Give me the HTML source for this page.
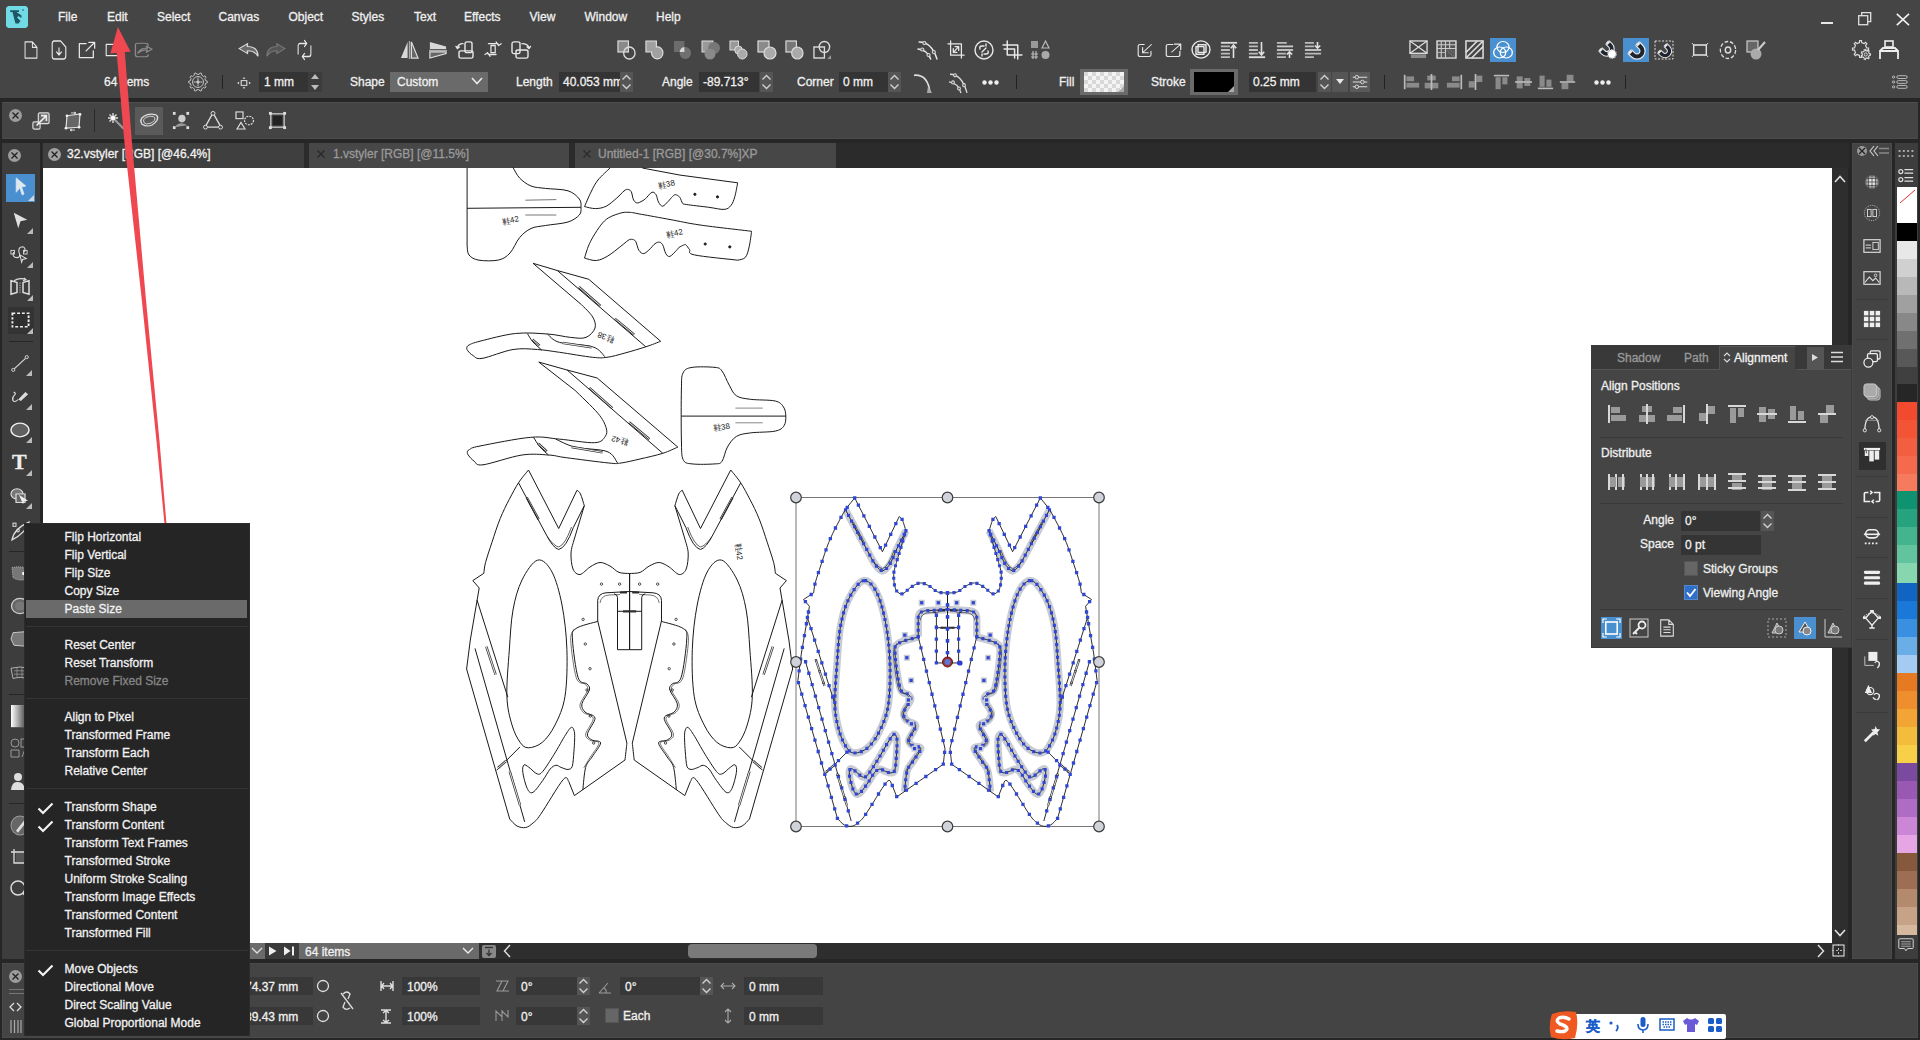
<!DOCTYPE html><html><head><meta charset="utf-8"><style>
*{margin:0;padding:0;box-sizing:border-box}
html,body{width:1920px;height:1040px;overflow:hidden;background:#262626;font-family:"Liberation Sans",sans-serif;font-size:12px;color:#f0f0f0}
.a{position:absolute}
.t{position:absolute;white-space:nowrap;line-height:14px;font-size:12px;-webkit-text-stroke:0.3px currentColor}
svg{position:absolute;overflow:visible}
.s{fill:none;stroke:#e8e8e8;stroke-width:1.4;stroke-linejoin:round;stroke-linecap:round}
.d{fill:none;stroke:#8a8a8a;stroke-width:1.4;stroke-linejoin:round;stroke-linecap:round}
.g{fill:#a8a8a8;stroke:none}
.w{fill:#e8e8e8;stroke:none}
</style></head><body>
<div class="a" style="left:0px;top:0px;width:1920px;height:98px;background:#454545;"></div>
<div class="a" style="left:2px;top:102px;width:1916px;height:37px;background:#444;border-top:1px solid #4e4e4e;border-bottom:1px solid #4b4b4b"></div>
<div class="a" style="left:42px;top:143px;width:1807px;height:25px;background:#2b2b2b;"></div>
<div class="a" style="left:2px;top:143px;width:38px;height:816px;background:#3d3d3d;"></div>
<div class="a" style="left:43px;top:168px;width:1789px;height:775px;background:#fff;"></div>
<div class="a" style="left:1832px;top:168px;width:16px;height:775px;background:#2e2e2e;"></div>
<div class="a" style="left:43px;top:943px;width:1805px;height:16px;background:#2e2e2e;"></div>
<div class="a" style="left:2px;top:963px;width:1916px;height:75px;background:#444;border:1px solid #4a4a4a"></div>
<div class="a" style="left:1852px;top:143px;width:40px;height:816px;background:#444;border:1px solid #4a4a4a"></div>
<div class="a" style="left:1895px;top:143px;width:23px;height:816px;background:#3d3d3d;"></div>
<div class="t" style="left:58px;top:10px;color:#f0f0f0;font-size:12px;">File</div>
<div class="t" style="left:107px;top:10px;color:#f0f0f0;font-size:12px;">Edit</div>
<div class="t" style="left:157px;top:10px;color:#f0f0f0;font-size:12px;">Select</div>
<div class="t" style="left:218.5px;top:10px;color:#f0f0f0;font-size:12px;">Canvas</div>
<div class="t" style="left:288.5px;top:10px;color:#f0f0f0;font-size:12px;">Object</div>
<div class="t" style="left:351.5px;top:10px;color:#f0f0f0;font-size:12px;">Styles</div>
<div class="t" style="left:414px;top:10px;color:#f0f0f0;font-size:12px;">Text</div>
<div class="t" style="left:464px;top:10px;color:#f0f0f0;font-size:12px;">Effects</div>
<div class="t" style="left:529.5px;top:10px;color:#f0f0f0;font-size:12px;">View</div>
<div class="t" style="left:584.5px;top:10px;color:#f0f0f0;font-size:12px;">Window</div>
<div class="t" style="left:656px;top:10px;color:#f0f0f0;font-size:12px;">Help</div>
<svg style="left:6px;top:6px" width="22" height="22" viewBox="0 0 22 22"><path d="M2 0 H20 L22 2 V20 L20 22 H2 L0 20 V2 Z" fill="#70dbe4"/><path d="M4.2 4.2 H13 V6 H10.5 L15.5 9.5 V12 L12.5 10 L11 11.5 L14.5 15 L12.5 17.5 H9.5 L8.5 14 L6.5 6 H4.2 Z" fill="#1f5565"/><circle cx="17" cy="4" r="0.8" fill="#1f5565"/></svg>
<div class="a" style="left:1821px;top:22px;width:12px;height:1px;background:#e8e8e8;height:1.5px"></div>
<svg style="left:1858px;top:12px" width="14" height="14" viewBox="0 0 14 14"><rect x="0.7" y="3.7" width="9" height="9" fill="none" stroke="#e0e0e0" stroke-width="1.3"/><path d="M3.7 3.7 V0.7 H12.7 V9.7 H9.7" fill="none" stroke="#e0e0e0" stroke-width="1.3"/></svg>
<svg style="left:1896px;top:13px" width="14" height="13" viewBox="0 0 14 13"><path d="M0.8 0.8 L13 12.2 M13 0.8 L0.8 12.2" stroke="#f0f0f0" stroke-width="1.6"/></svg>
<svg style="left:24px;top:41px" width="14" height="18" viewBox="0 0 20 20" preserveAspectRatio="none"><path class="s" d="M1.5 1 H12 L18.5 7 V19 H1.5 Z M12 1 V7 H18.5" stroke-width="1.6"/></svg>
<svg style="left:51px;top:40px" width="16" height="20" viewBox="0 0 20 20" preserveAspectRatio="none"><path class="s" stroke-width="1.6" d="M4 1 H12 L18.5 7 V16 Q18.5 19 15.5 19 H4 Q1.5 19 1.5 16 V4 Q1.5 1 4 1 Z"/><path class="s" stroke-width="1.6" d="M10 8 V15 M7 12 L10 15 L13 12"/></svg>
<svg style="left:78px;top:41px" width="18" height="18" viewBox="0 0 20 20" preserveAspectRatio="none"><path class="s" stroke-width="1.8" d="M9 3 H1.5 V18.5 H17 V11 M9 11 L18 2 M12 1.5 H18.5 V8"/></svg>
<svg style="left:105px;top:42px" width="16" height="16" viewBox="0 0 20 20" preserveAspectRatio="none"><path class="s" stroke-width="1.6" d="M1.5 3 H18.5 V17 H1.5 Z"/></svg>
<svg style="left:134px;top:42px" width="19" height="16" viewBox="0 0 20 20" preserveAspectRatio="none"><path class="d" d="M15 4 Q15 1.5 12 1.5 H4 Q1.5 1.5 1.5 4 V16 Q1.5 18.5 4 18.5 H12 Q15 18.5 15 16 M4 14 Q7 7 14 8 L13 5 L19 9 L13 13 L14 10 Q9 9 4 14"/></svg>
<svg style="left:238px;top:43px" width="21" height="14" viewBox="0 0 20 20" preserveAspectRatio="none"><path d="M1 8 L9 1 V5 Q19 5 19 19 Q16 11 9 11 V15 Z" fill="#6a6a6a" stroke="#d8d8d8" stroke-width="1.3"/></svg>
<svg style="left:266px;top:43px" width="20" height="14" viewBox="0 0 20 20" preserveAspectRatio="none"><path d="M19 8 L11 1 V5 Q1 5 1 19 Q4 11 11 11 V15 Z" fill="#555" stroke="#777" stroke-width="1.3"/></svg>
<svg style="left:297px;top:40px" width="15" height="20" viewBox="0 0 20 20" preserveAspectRatio="none"><path class="s" stroke-width="1.8" d="M12 3.5 H4 Q1.5 3.5 1.5 6 V14 M8 16.5 H16 Q18.5 16.5 18.5 14 V6 M10 0.5 L13 3.5 L10 6.5 M10 13.5 L7 16.5 L10 19.5"/></svg>
<svg style="left:400px;top:41px" width="19" height="18" viewBox="0 0 20 20" preserveAspectRatio="none"><path d="M1 19 L8 1 V19 Z" fill="#d8d8d8"/><path d="M10 0 V20" stroke="#aaa" stroke-width="1.5"/><path d="M12 1 L19 19 H12 Z" fill="#666" stroke="#ddd" stroke-width="1.3"/></svg>
<svg style="left:429px;top:41px" width="18" height="18" viewBox="0 0 20 20" preserveAspectRatio="none"><path d="M1 1 L19 6 V9 H1 Z" fill="#d8d8d8"/><path d="M0 10.5 H20" stroke="#aaa" stroke-width="1.5"/><path d="M1 12 H19 V14 L1 19 Z" fill="#666" stroke="#ddd" stroke-width="1.3"/></svg>
<svg style="left:456px;top:41px" width="20" height="18" viewBox="0 0 20 20" preserveAspectRatio="none"><rect x="9" y="1" width="7" height="12" rx="2" class="s"/><rect x="3" y="11" width="14" height="8" rx="2" class="s"/><path class="s" d="M7 3 Q2 3 1.5 8 M0 6 L1.5 8.5 L3.5 6.5"/></svg>
<svg style="left:485px;top:41px" width="17" height="18" viewBox="0 0 20 20" preserveAspectRatio="none"><path class="s" d="M7 5 H12 V13 H7 Z M4 3 H14 Q16 3 16 5 M13 1 L16 5 L19 3 M13 15 H5 Q3 15 3 13 M6 17 L3 13 L0 15"/></svg>
<svg style="left:511px;top:41px" width="20" height="18" viewBox="0 0 20 20" preserveAspectRatio="none"><rect x="1" y="1" width="8" height="13" rx="2" class="s"/><rect x="5" y="10" width="12" height="9" rx="2" class="s"/><path class="s" d="M11 3 Q17 3 18 8 M16 6.5 L18 8.5 L19.5 6"/></svg>
<svg style="left:617px;top:40px" width="19" height="20" viewBox="0 0 20 20" preserveAspectRatio="none"><rect x="1" y="1" width="11" height="11" fill="#8a8a8a" stroke="#ddd" stroke-width="1.2"/><circle cx="13" cy="13" r="6" fill="none" stroke="#ddd" stroke-width="1.4"/></svg>
<svg style="left:645px;top:40px" width="19" height="20" viewBox="0 0 20 20" preserveAspectRatio="none"><path d="M1 1 H12 V7 A6 6 0 1 1 7 12 H1 Z" fill="#a0a0a0" stroke="#ddd" stroke-width="1.2"/></svg>
<svg style="left:673px;top:40px" width="19" height="20" viewBox="0 0 20 20" preserveAspectRatio="none"><rect x="1" y="1" width="11" height="11" fill="#6c6c6c"/><circle cx="13" cy="13" r="6" fill="#707070"/><path d="M7 12 A6 6 0 0 1 12 7 V12 Z" fill="#d8d8d8"/></svg>
<svg style="left:701px;top:40px" width="20" height="20" viewBox="0 0 20 20" preserveAspectRatio="none"><rect x="1" y="1" width="11" height="11" fill="#9a9a9a" stroke="#ddd" stroke-width="1"/><circle cx="13" cy="8" r="6" fill="#777"/><circle cx="9" cy="14" r="5.5" fill="#8a8a8a"/></svg>
<svg style="left:729px;top:40px" width="19" height="20" viewBox="0 0 20 20" preserveAspectRatio="none"><rect x="1" y="1" width="9" height="9" fill="#999" stroke="#ddd" stroke-width="1"/><circle cx="10" cy="10" r="4" fill="#aaa" stroke="#ddd"/><circle cx="14" cy="14" r="5" fill="#aaa" stroke="#ddd"/></svg>
<svg style="left:757px;top:40px" width="20" height="20" viewBox="0 0 20 20" preserveAspectRatio="none"><rect x="1" y="1" width="11" height="11" fill="#8a8a8a" stroke="#ddd" stroke-width="1.2"/><circle cx="13" cy="13" r="6" fill="#aaa" stroke="#ddd" stroke-width="1.2"/></svg>
<svg style="left:785px;top:40px" width="19" height="20" viewBox="0 0 20 20" preserveAspectRatio="none"><rect x="1" y="1" width="11" height="11" fill="#777" stroke="#ddd" stroke-width="1.2"/><circle cx="13" cy="13" r="6" fill="#aaa" stroke="#ddd" stroke-width="1.2"/></svg>
<svg style="left:813px;top:40px" width="19" height="20" viewBox="0 0 20 20" preserveAspectRatio="none"><rect x="1" y="7" width="11" height="11" fill="none" stroke="#ddd" stroke-width="1.4"/><circle cx="12" cy="7" r="5.5" fill="none" stroke="#ddd" stroke-width="1.4"/><path d="M15 19 L19 15 V19 Z" fill="#999"/></svg>
<svg style="left:917px;top:40px" width="21" height="20" viewBox="0 0 20 20" preserveAspectRatio="none"><path class="s" d="M2 2 Q14 2 19 19 M1 9 Q10 10 13 19"/><circle cx="7" cy="3" r="1.5" fill="#555" stroke="#ddd"/><circle cx="16" cy="12" r="1.5" fill="#555" stroke="#ddd"/><circle cx="5" cy="9.5" r="1.5" fill="#555" stroke="#ddd"/><circle cx="11" cy="15" r="1.5" fill="#555" stroke="#ddd"/></svg>
<svg style="left:947px;top:40px" width="18" height="19" viewBox="0 0 20 20" preserveAspectRatio="none"><path class="s" stroke-width="1.8" d="M4 1 V16 H19 M1 4 H16 V19 M7 13 L13 7 M7 9 V13 H11 M9 7 H13 V11"/></svg>
<svg style="left:974px;top:40px" width="20" height="20" viewBox="0 0 20 20" preserveAspectRatio="none"><circle cx="10" cy="10" r="9" class="s"/><path class="s" d="M6 9 Q5 6 8 6 L10 6 M14 11 Q15 14 12 14 L10 14 M8 12 L12 8 M12 4 V6 M8 14 V16"/></svg>
<svg style="left:1002px;top:40px" width="21" height="20" viewBox="0 0 20 20" preserveAspectRatio="none"><path class="s" stroke-width="1.8" d="M5 1 V15 H19 M1 5 H15 V19"/><path d="M2 9 H12 V18" class="s"/></svg>
<svg style="left:1030px;top:40px" width="20" height="20" viewBox="0 0 20 20" preserveAspectRatio="none"><rect x="1" y="1" width="7" height="7" fill="#999"/><path d="M12 8 L15.5 1 L19 8 Z" fill="none" stroke="#bbb" stroke-width="1.2"/><circle cx="15.5" cy="15" r="4" fill="#aaa"/><path d="M1 14 H8 M1 17 H8 M3 11 V19 M6 11 V19" stroke="#bbb" stroke-width="1.2"/></svg>
<svg style="left:1137px;top:43px" width="16" height="15" viewBox="0 0 20 20" preserveAspectRatio="none"><path class="s" stroke-width="2" d="M9 2 H4 Q1.5 2 1.5 4.5 V15.5 Q1.5 18 4 18 H15 Q17.5 18 17.5 15.5 V11 M18 2 L8 12 M7 6 V13 H14"/></svg>
<svg style="left:1165px;top:43px" width="17" height="15" viewBox="0 0 20 20" preserveAspectRatio="none"><path class="s" stroke-width="2" d="M9 2 H4 Q1.5 2 1.5 4.5 V15.5 Q1.5 18 4 18 H15 Q17.5 18 17.5 15.5 V11 M8 12 L18 2 M11 1.5 H18.5 V9"/></svg>
<svg style="left:1191px;top:40px" width="20" height="19" viewBox="0 0 20 20" preserveAspectRatio="none"><circle cx="10" cy="10" r="9" class="s"/><rect x="5" y="7" width="8" height="8" class="s"/><rect x="7" y="5" width="8" height="8" class="s"/></svg>
<svg style="left:1220px;top:41px" width="18" height="18" viewBox="0 0 20 20" preserveAspectRatio="none"><path d="M1 2 H19" stroke="#ddd" stroke-width="2"/><path d="M1 6 H11 M1 10 H11 M1 14 H11 M1 18 H11" stroke="#bbb" stroke-width="2"/><path d="M15 19 V5 M12 8 L15 4.5 L18 8" stroke="#e0e0e0" stroke-width="1.8" fill="none"/></svg>
<svg style="left:1248px;top:41px" width="18" height="18" viewBox="0 0 20 20" preserveAspectRatio="none"><path d="M1 18 H19" stroke="#ddd" stroke-width="2"/><path d="M1 2 H11 M1 6 H11 M1 10 H11 M1 14 H11" stroke="#bbb" stroke-width="2"/><path d="M15 1 V15 M12 12 L15 15.5 L18 12" stroke="#e0e0e0" stroke-width="1.8" fill="none"/></svg>
<svg style="left:1276px;top:41px" width="18" height="18" viewBox="0 0 20 20" preserveAspectRatio="none"><path d="M1 2 H12 M1 10 H19 M1 14 H11 M1 18 H11" stroke="#bbb" stroke-width="2"/><path d="M1 6 H19" stroke="#ccc" stroke-width="2"/><path d="M15 19 V12 M12 15 L15 12 L18 15" stroke="#e0e0e0" stroke-width="1.8" fill="none"/></svg>
<svg style="left:1304px;top:41px" width="18" height="18" viewBox="0 0 20 20" preserveAspectRatio="none"><path d="M1 2 H11 M1 6 H11 M1 14 H19 M1 18 H11" stroke="#bbb" stroke-width="2"/><path d="M1 10 H19" stroke="#ccc" stroke-width="2"/><path d="M15 1 V8 M12 5 L15 8 L18 5" stroke="#e0e0e0" stroke-width="1.8" fill="none"/></svg>
<svg style="left:1409px;top:40px" width="19" height="19" viewBox="0 0 20 20" preserveAspectRatio="none"><rect x="1" y="1" width="18" height="13" fill="none" stroke="#ddd" stroke-width="1.4"/><path d="M1 1 L19 14 M19 1 L1 14" stroke="#ddd" stroke-width="1.2"/><rect x="2" y="15" width="16" height="4" fill="#8a8a8a"/></svg>
<svg style="left:1436px;top:40px" width="21" height="19" viewBox="0 0 20 20" preserveAspectRatio="none"><rect x="1" y="1" width="18" height="18" fill="#555" stroke="#ddd" stroke-width="1.4"/><path d="M5 1 V19 M9 1 V19 M13 1 V9 M1 5 H19 M1 9 H19 M1 13 H9" stroke="#ccc" stroke-width="1"/><path d="M10 11 L18 18 M13 10 L18 14" stroke="#888" stroke-width="1" stroke-dasharray="1 1"/></svg>
<svg style="left:1465px;top:40px" width="19" height="19" viewBox="0 0 20 20" preserveAspectRatio="none"><rect x="1" y="1" width="18" height="18" fill="none" stroke="#ddd" stroke-width="1.6"/><path d="M1 13 L13 1 M1 19 L19 1 M7 19 L19 7" stroke="#ddd" stroke-width="1.6"/></svg>
<div class="a" style="left:1490px;top:38px;width:26px;height:24px;background:#4a90d0;"></div>
<svg style="left:1492px;top:40px" width="22" height="20" viewBox="0 0 20 20" preserveAspectRatio="none"><circle cx="10" cy="7" r="5.5" fill="none" stroke="#fff" stroke-width="1.2"/><circle cx="7" cy="12.5" r="5.5" fill="none" stroke="#fff" stroke-width="1.2"/><circle cx="13" cy="12.5" r="5.5" fill="none" stroke="#fff" stroke-width="1.2"/></svg>
<svg style="left:1598px;top:40px" width="20" height="20" viewBox="0 0 20 20" preserveAspectRatio="none"><g transform="translate(-1,-1) scale(0.9)"><path d="M11.4 3.6 L14.9 7.1 A5.5 5.5 0 1 1 7.1 14.9 L3.6 11.4" fill="none" stroke="#e8e8e8" stroke-width="6.4"/><path d="M11.4 3.6 L14.9 7.1 A5.5 5.5 0 1 1 7.1 14.9 L3.6 11.4" fill="none" stroke="#1e2530" stroke-width="4"/><path d="M11 3.2 L13 5.2 M3.2 11 L5.2 13" stroke="#e8e8e8" stroke-width="4"/></g><circle cx="14" cy="14" r="4.2" fill="#fff" stroke="#bbb" stroke-width="1.4" stroke-dasharray="1.6 1"/></svg>
<div class="a" style="left:1623px;top:38px;width:26px;height:24px;background:#4a90d0;"></div>
<svg style="left:1626px;top:40px" width="20" height="20" viewBox="0 0 20 20" preserveAspectRatio="none"><path d="M11.4 3.6 L14.9 7.1 A5.5 5.5 0 1 1 7.1 14.9 L3.6 11.4" fill="none" stroke="#e8e8e8" stroke-width="6.4"/><path d="M11.4 3.6 L14.9 7.1 A5.5 5.5 0 1 1 7.1 14.9 L3.6 11.4" fill="none" stroke="#1e2530" stroke-width="4"/><path d="M11 3.2 L13 5.2 M3.2 11 L5.2 13" stroke="#e8e8e8" stroke-width="4"/></svg>
<svg style="left:1654px;top:40px" width="20" height="20" viewBox="0 0 20 20" preserveAspectRatio="none"><rect x="1" y="1" width="18" height="18" fill="none" stroke="#ddd" stroke-width="1" stroke-dasharray="2 1.5"/><g transform="translate(2,2) scale(0.82)"><path d="M11.4 3.6 L14.9 7.1 A5.5 5.5 0 1 1 7.1 14.9 L3.6 11.4" fill="none" stroke="#e8e8e8" stroke-width="6.4"/><path d="M11.4 3.6 L14.9 7.1 A5.5 5.5 0 1 1 7.1 14.9 L3.6 11.4" fill="none" stroke="#1e2530" stroke-width="4"/><path d="M11 3.2 L13 5.2 M3.2 11 L5.2 13" stroke="#e8e8e8" stroke-width="4"/></g></svg>
<svg style="left:1691px;top:40px" width="18" height="20" viewBox="0 0 20 20" preserveAspectRatio="none"><rect x="3" y="5" width="14" height="10" fill="none" stroke="#ddd" stroke-width="1.6"/><path d="M1 3 L3 5 M19 3 L17 5 M1 17 L3 15 M19 17 L17 15" stroke="#ddd" stroke-width="1"/></svg>
<svg style="left:1719px;top:40px" width="18" height="20" viewBox="0 0 20 20" preserveAspectRatio="none"><circle cx="10" cy="10" r="8.5" fill="none" stroke="#ddd" stroke-width="1.4" stroke-dasharray="4 2"/><circle cx="10" cy="10" r="3" fill="none" stroke="#ddd" stroke-width="1.6"/></svg>
<svg style="left:1746px;top:40px" width="20" height="20" viewBox="0 0 20 20" preserveAspectRatio="none"><rect x="1" y="1" width="11" height="11" fill="#666" stroke="#ccc" stroke-width="1.2"/><circle cx="10" cy="14" r="5.5" fill="#aaa"/><path d="M12 10 L19 2" stroke="#ccc" stroke-width="2"/></svg>
<svg style="left:1852px;top:40px" width="19" height="20" viewBox="0 0 20 20" preserveAspectRatio="none"><path d="M15.40 7.86 L17.44 8.00 L17.44 10.00 L15.40 10.14 L14.33 12.72 L15.68 14.26 L14.26 15.68 L12.72 14.33 L10.14 15.40 L10.00 17.44 L8.00 17.44 L7.86 15.40 L5.28 14.33 L3.74 15.68 L2.32 14.26 L3.67 12.72 L2.60 10.14 L0.56 10.00 L0.56 8.00 L2.60 7.86 L3.67 5.28 L2.32 3.74 L3.74 2.32 L5.28 3.67 L7.86 2.60 L8.00 0.56 L10.00 0.56 L10.14 2.60 L12.72 3.67 L14.26 2.32 L15.68 3.74 L14.33 5.28 Z" fill="none" stroke="#ddd" stroke-width="1.2"/><path d="M18.22 13.74 L19.45 13.83 L19.45 15.17 L18.22 15.26 L17.42 16.94 L18.11 17.96 L17.06 18.79 L16.23 17.89 L14.41 18.30 L14.05 19.48 L12.74 19.18 L12.93 17.96 L11.48 16.80 L10.33 17.25 L9.74 16.05 L10.82 15.43 L10.82 13.57 L9.74 12.95 L10.33 11.75 L11.48 12.20 L12.93 11.04 L12.74 9.82 L14.05 9.52 L14.41 10.70 L16.23 11.11 L17.06 10.21 L18.11 11.04 L17.42 12.06 Z" fill="#444" stroke="#ddd" stroke-width="1.1"/><circle cx="14.5" cy="14.5" r="1.6" fill="none" stroke="#ddd"/></svg>
<svg style="left:1879px;top:40px" width="20" height="20" viewBox="0 0 20 20" preserveAspectRatio="none"><rect x="6" y="1" width="8" height="6" fill="none" stroke="#eee" stroke-width="1.6"/><path d="M1 19 V11 H19 V19 M1 11 L4 8 H16 L19 11" fill="none" stroke="#eee" stroke-width="1.8"/></svg>
<div class="t" style="left:104px;top:75px;color:#f0f0f0;font-size:12px;">64 items</div>
<svg style="left:188px;top:72px" width="20" height="20" viewBox="0 0 20 20" preserveAspectRatio="none"><path d="M17.70 8.78 L19.26 9.12 L19.26 10.88 L17.70 11.22 L16.95 13.54 L18.00 14.73 L16.98 16.15 L15.52 15.52 L13.54 16.95 L13.69 18.54 L12.03 19.08 L11.22 17.70 L8.78 17.70 L7.97 19.08 L6.31 18.54 L6.46 16.95 L4.48 15.52 L3.02 16.15 L2.00 14.73 L3.05 13.54 L2.30 11.22 L0.74 10.88 L0.74 9.12 L2.30 8.78 L3.05 6.46 L2.00 5.27 L3.02 3.85 L4.48 4.48 L6.46 3.05 L6.31 1.46 L7.97 0.92 L8.78 2.30 L11.22 2.30 L12.03 0.92 L13.69 1.46 L13.54 3.05 L15.52 4.48 L16.98 3.85 L18.00 5.27 L16.95 6.46 Z" fill="none" stroke="#ccc" stroke-width="0.9"/><circle cx="10" cy="10" r="5.5" fill="none" stroke="#ccc" stroke-width="0.9"/><path d="M10 5.5 V14.5 M5.5 10 H14.5" stroke="#ccc" stroke-width="0.9"/><circle cx="10" cy="10" r="1.5" fill="#ccc"/></svg>
<div class="a" style="left:222px;top:75px;width:1px;height:14px;background:#222;"></div>
<svg style="left:237px;top:77px" width="14" height="12" viewBox="0 0 20 20" preserveAspectRatio="none"><rect x="6" y="6" width="8" height="8" fill="none" stroke="#ddd" stroke-width="1.6"/><path d="M10 0 L8 3 H12 Z M10 20 L8 17 H12 Z M0 10 L3 8 V12 Z M20 10 L17 8 V12 Z" fill="#ddd"/></svg>
<div class="a" style="left:259px;top:72px;width:49px;height:20px;background:#343434;"></div>
<div class="a" style="left:308px;top:72px;width:14px;height:20px;background:#3c3c3c;"></div>
<svg style="left:308px;top:72px" width="14" height="20" viewBox="0 0 14 20"><path d="M3.0 7.0 L7.0 2.0 L11.0 7.0 Z M3.0 13.0 L7.0 18.0 L11.0 13.0 Z" fill="#bbb"/></svg>
<div class="t" style="left:264px;top:75px;color:#f0f0f0;font-size:12px;">1 mm</div>
<div class="t" style="left:350px;top:75px;color:#f0f0f0;font-size:12px;">Shape</div>
<div class="a" style="left:390px;top:72px;width:98px;height:20px;background:#6a6a6a;"></div>
<div class="t" style="left:397px;top:75px;color:#f0f0f0;font-size:12px;">Custom</div>
<svg style="left:471px;top:77px" width="12" height="8" viewBox="0 0 12 8"><path d="M1 1 L6 6.5 L11 1" fill="none" stroke="#e8e8e8" stroke-width="1.6"/></svg>
<div class="t" style="left:516px;top:75px;color:#f0f0f0;font-size:12px;">Length</div>
<div class="a" style="left:559px;top:72px;width:61px;height:20px;background:#343434;"></div>
<div class="a" style="left:620px;top:72px;width:13px;height:20px;background:#555;"></div>
<svg style="left:620px;top:72px" width="13" height="20" viewBox="0 0 13 20"><path d="M2.5 7.5 L6.5 3.5 L10.5 7.5 M2.5 12.5 L6.5 16.5 L10.5 12.5" fill="none" stroke="#d0d0d0" stroke-width="1.4"/></svg>
<div class="t" style="left:563px;top:75px;color:#f0f0f0;font-size:12px;">40.053 mm</div>
<div class="a" style="left:620px;top:72px;width:13px;height:20px;background:#555;"></div>
<div class="a" style="left:620px;top:72px;width:13px;height:20px;background:#555;"></div>
<svg style="left:620px;top:72px" width="13" height="20" viewBox="0 0 13 20"><path d="M2.5 7.5 L6.5 3.5 L10.5 7.5 M2.5 12.5 L6.5 16.5 L10.5 12.5" fill="none" stroke="#d0d0d0" stroke-width="1.4"/></svg>
<div class="t" style="left:662px;top:75px;color:#f0f0f0;font-size:12px;">Angle</div>
<div class="a" style="left:699px;top:72px;width:60px;height:20px;background:#343434;"></div>
<div class="a" style="left:760px;top:72px;width:13px;height:20px;background:#555;"></div>
<svg style="left:760px;top:72px" width="13" height="20" viewBox="0 0 13 20"><path d="M2.5 7.5 L6.5 3.5 L10.5 7.5 M2.5 12.5 L6.5 16.5 L10.5 12.5" fill="none" stroke="#d0d0d0" stroke-width="1.4"/></svg>
<div class="t" style="left:703px;top:75px;color:#f0f0f0;font-size:12px;">-89.713°</div>
<div class="t" style="left:797px;top:75px;color:#f0f0f0;font-size:12px;">Corner</div>
<div class="a" style="left:839px;top:72px;width:49px;height:20px;background:#343434;"></div>
<div class="a" style="left:888px;top:72px;width:13px;height:20px;background:#555;"></div>
<svg style="left:888px;top:72px" width="13" height="20" viewBox="0 0 13 20"><path d="M2.5 7.5 L6.5 3.5 L10.5 7.5 M2.5 12.5 L6.5 16.5 L10.5 12.5" fill="none" stroke="#d0d0d0" stroke-width="1.4"/></svg>
<div class="t" style="left:843px;top:75px;color:#f0f0f0;font-size:12px;">0 mm</div>
<svg style="left:913px;top:72px" width="20" height="22" viewBox="0 0 20 20" preserveAspectRatio="none"><path d="M1 3 Q15 2 17 19" fill="none" stroke="#ddd" stroke-width="1.6"/><path d="M15 13 L19 19 H14 Z" fill="#aaa"/></svg>
<svg style="left:948px;top:72px" width="20" height="22" viewBox="0 0 20 20" preserveAspectRatio="none"><path d="M2 2 Q14 2 19 19 M1 9 Q10 10 13 19" fill="none" stroke="#ddd" stroke-width="1.3"/><circle cx="7" cy="3" r="1.4" fill="#555" stroke="#ddd"/><circle cx="16" cy="12" r="1.4" fill="#555" stroke="#ddd"/><circle cx="5" cy="9.5" r="1.4" fill="#555" stroke="#ddd"/><circle cx="11" cy="15" r="1.4" fill="#555" stroke="#ddd"/></svg>
<svg style="left:982px;top:80px" width="17" height="5" viewBox="0 0 17 5"><circle cx="2.5" cy="2.5" r="2.2" fill="#eee"/><circle cx="8.5" cy="2.5" r="2.2" fill="#eee"/><circle cx="14.5" cy="2.5" r="2.2" fill="#eee"/></svg>
<div class="a" style="left:1016px;top:75px;width:1px;height:14px;background:#222;"></div>
<div class="t" style="left:1059px;top:75px;color:#f0f0f0;font-size:12px;">Fill</div>
<div class="a" style="left:1080px;top:69px;width:48px;height:26px;background:#6a6a6a;"></div>
<svg style="left:1084px;top:72px" width="40" height="20" viewBox="0 0 40 20"><defs><pattern id="ck" width="8" height="8" patternUnits="userSpaceOnUse"><rect width="8" height="8" fill="#f4f4f4"/><rect width="4" height="4" fill="#d8d8d8"/><rect x="4" y="4" width="4" height="4" fill="#d8d8d8"/></pattern></defs><rect width="40" height="20" fill="url(#ck)"/><path d="M40 14 V20 H34 Z" fill="#aaa"/></svg>
<div class="t" style="left:1151px;top:75px;color:#f0f0f0;font-size:12px;">Stroke</div>
<div class="a" style="left:1190px;top:69px;width:48px;height:26px;background:#6a6a6a;"></div>
<div class="a" style="left:1194px;top:72px;width:40px;height:20px;background:#000;"></div>
<svg style="left:1228px;top:86px" width="6" height="6" viewBox="0 0 6 6"><path d="M6 0 V6 H0 Z" fill="#aaa"/></svg>
<div class="a" style="left:1249px;top:72px;width:67px;height:20px;background:#343434;"></div>
<div class="t" style="left:1253px;top:75px;color:#f0f0f0;font-size:12px;">0.25 mm</div>
<div class="a" style="left:1318px;top:72px;width:13px;height:20px;background:#555;"></div>
<svg style="left:1318px;top:72px" width="13" height="20" viewBox="0 0 13 20"><path d="M2.5 7.5 L6.5 3.5 L10.5 7.5 M2.5 12.5 L6.5 16.5 L10.5 12.5" fill="none" stroke="#d0d0d0" stroke-width="1.4"/></svg>
<div class="a" style="left:1332px;top:72px;width:16px;height:20px;background:#555;"></div>
<svg style="left:1336px;top:79px" width="8" height="6" viewBox="0 0 8 6"><path d="M0 0 H8 L4 5 Z" fill="#e8e8e8"/></svg>
<div class="a" style="left:1350px;top:72px;width:20px;height:20px;background:#5a5a5a;"></div>
<svg style="left:1352px;top:74px" width="16" height="16" viewBox="0 0 20 20" preserveAspectRatio="none"><path d="M1 4 H19 M1 10 H19 M1 16 H19" stroke="#ddd" stroke-width="1.4"/><circle cx="6" cy="4" r="2.2" fill="#5a5a5a" stroke="#ddd" stroke-width="1.2"/><circle cx="13" cy="10" r="2.2" fill="#5a5a5a" stroke="#ddd" stroke-width="1.2"/><circle cx="6" cy="16" r="2.2" fill="#5a5a5a" stroke="#ddd" stroke-width="1.2"/></svg>
<div class="a" style="left:1384px;top:75px;width:1px;height:14px;background:#222;"></div>
<svg style="left:1403px;top:74px" width="17" height="16" viewBox="0 0 20 20" preserveAspectRatio="none"><path d="M2 1 V19" stroke="#bbb" stroke-width="2"/><rect x="4" y="3" width="9" height="6" fill="#8a8a8a"/><rect x="4" y="11" width="15" height="6" fill="#8a8a8a"/></svg>
<svg style="left:1423px;top:74px" width="17" height="16" viewBox="0 0 20 20" preserveAspectRatio="none"><rect x="5" y="2" width="10" height="6" fill="#8a8a8a"/><rect x="2" y="11" width="16" height="7" fill="#8a8a8a"/><path d="M10 0 V20" stroke="#bbb" stroke-width="2"/></svg>
<svg style="left:1446px;top:74px" width="17" height="16" viewBox="0 0 20 20" preserveAspectRatio="none"><path d="M18 1 V19" stroke="#bbb" stroke-width="2"/><rect x="7" y="3" width="9" height="6" fill="#8a8a8a"/><rect x="1" y="11" width="15" height="6" fill="#8a8a8a"/></svg>
<svg style="left:1467px;top:74px" width="17" height="16" viewBox="0 0 20 20" preserveAspectRatio="none"><rect x="2" y="9" width="7" height="8" fill="#8a8a8a"/><rect x="11" y="2" width="7" height="8" fill="#8a8a8a"/><path d="M10 0 V20" stroke="#bbb" stroke-width="2"/></svg>
<svg style="left:1493px;top:74px" width="17" height="16" viewBox="0 0 20 20" preserveAspectRatio="none"><path d="M1 2 H19" stroke="#bbb" stroke-width="2"/><rect x="3" y="4" width="6" height="15" fill="#8a8a8a"/><rect x="11" y="4" width="6" height="9" fill="#8a8a8a"/></svg>
<svg style="left:1515px;top:74px" width="17" height="16" viewBox="0 0 20 20" preserveAspectRatio="none"><rect x="2" y="3" width="7" height="15" fill="#8a8a8a"/><rect x="11" y="5" width="7" height="10" fill="#8a8a8a"/><path d="M0 10 H20" stroke="#bbb" stroke-width="2"/></svg>
<svg style="left:1537px;top:74px" width="17" height="16" viewBox="0 0 20 20" preserveAspectRatio="none"><path d="M1 18 H19" stroke="#bbb" stroke-width="2"/><rect x="3" y="2" width="6" height="14" fill="#8a8a8a"/><rect x="11" y="7" width="6" height="9" fill="#8a8a8a"/></svg>
<svg style="left:1559px;top:74px" width="17" height="16" viewBox="0 0 20 20" preserveAspectRatio="none"><rect x="9" y="1" width="8" height="8" fill="#8a8a8a"/><rect x="3" y="11" width="8" height="8" fill="#8a8a8a"/><path d="M1 10 H19" stroke="#bbb" stroke-width="2"/></svg>
<svg style="left:1594px;top:80px" width="17" height="5" viewBox="0 0 17 5"><circle cx="2.5" cy="2.5" r="2.2" fill="#eee"/><circle cx="8.5" cy="2.5" r="2.2" fill="#eee"/><circle cx="14.5" cy="2.5" r="2.2" fill="#eee"/></svg>
<div class="a" style="left:1625px;top:75px;width:1px;height:14px;background:#222;"></div>
<svg style="left:1892px;top:75px" width="16" height="14" viewBox="0 0 20 20" preserveAspectRatio="none"><circle cx="2" cy="3" r="1.5" fill="none" stroke="#ddd"/><circle cx="2" cy="10" r="1.5" fill="none" stroke="#ddd"/><circle cx="2" cy="17" r="1.5" fill="none" stroke="#ddd"/><rect x="6" y="1" width="13" height="4" rx="2" fill="none" stroke="#ddd"/><rect x="6" y="8" width="13" height="4" rx="2" fill="none" stroke="#ddd"/><rect x="6" y="15" width="13" height="4" rx="2" fill="none" stroke="#ddd"/></svg>
<svg style="left:8.5px;top:108.5px" width="13.0" height="13.0" viewBox="0 0 13.0 13.0"><circle cx="6.5" cy="6.5" r="6.5" fill="#9c9c9c"/><path d="M3.5 3.5 L9.5 9.5 M9.5 3.5 L3.5 9.5" stroke="#222" stroke-width="1.3"/></svg>
<svg style="left:32px;top:112px" width="18" height="18" viewBox="0 0 20 20" preserveAspectRatio="none"><rect x="1" y="11" width="8" height="8" rx="1.5" fill="#555" stroke="#ddd" stroke-width="1.3"/><rect x="7" y="1" width="12" height="12" rx="1.5" fill="#666" stroke="#ddd" stroke-width="1.3"/><path d="M5 15 L16 4 M10 4 H16 V10" fill="none" stroke="#eee" stroke-width="1.8"/></svg>
<svg style="left:63px;top:112px" width="20" height="19" viewBox="0 0 20 20" preserveAspectRatio="none"><path d="M4 4 L17 2 L16 16 L3 17 Z" fill="#666" stroke="#ddd" stroke-width="1.2"/><circle cx="4" cy="4" r="1.4" fill="#eee"/><circle cx="17" cy="2.5" r="1.4" fill="#eee"/><circle cx="16" cy="16" r="1.4" fill="#eee"/><circle cx="3" cy="17" r="1.4" fill="#eee"/><path d="M8 1 H13 M11 0 L13 1 L11 2 M12 19 H7 M9 18 L7 19 L9 20" stroke="#ddd" stroke-width="1"/></svg>
<div class="a" style="left:94px;top:109px;width:1px;height:23px;background:#2a2a2a;"></div>
<svg style="left:106px;top:111px" width="20" height="20" viewBox="0 0 20 20" preserveAspectRatio="none"><path d="M2 7 H12 M7 2 V12 M3.5 3.5 L10.5 10.5 M10.5 3.5 L3.5 10.5" stroke="#ddd" stroke-width="1.4"/><circle cx="7" cy="7" r="2" fill="#fff"/><path d="M9 9 L18 18" stroke="#999" stroke-width="2.2"/></svg>
<div class="a" style="left:135px;top:107px;width:28px;height:28px;background:#5a5a5a;"></div>
<svg style="left:139px;top:113px" width="20" height="16" viewBox="0 0 20 20" preserveAspectRatio="none"><path d="M3 14 Q0 8 5 4 Q10 0 16 2 Q20 4 18 9 Q16 13 13 15 Q8 18 3 14 Z" fill="none" stroke="#ddd" stroke-width="1.4"/><path d="M5 12 Q3 8 7 5.5 Q11 3 14.5 4.5 Q17 6 15.5 9 Q14 12 11 13 Q7 15 5 12 Z" fill="none" stroke="#ddd" stroke-width="1"/></svg>
<svg style="left:172px;top:111px" width="18" height="19" viewBox="0 0 20 20" preserveAspectRatio="none"><rect x="1" y="1" width="3" height="3" fill="#ddd"/><rect x="16" y="1" width="3" height="3" fill="#ddd"/><rect x="1" y="16" width="3" height="3" fill="#ddd"/><rect x="16" y="16" width="3" height="3" fill="#ddd"/><circle cx="11" cy="8" r="4" fill="#ccc"/><path d="M3 17 Q8 10 17 15" fill="#999"/></svg>
<svg style="left:203px;top:111px" width="20" height="19" viewBox="0 0 20 20" preserveAspectRatio="none"><path d="M10 2 L2 17 H18 Z" fill="none" stroke="#ddd" stroke-width="1.3"/><circle cx="10" cy="2.5" r="2" fill="#444" stroke="#ddd"/><circle cx="2.5" cy="17" r="2" fill="#444" stroke="#ddd"/><circle cx="17.5" cy="17" r="2" fill="#444" stroke="#ddd"/></svg>
<svg style="left:235px;top:111px" width="20" height="19" viewBox="0 0 20 20" preserveAspectRatio="none"><rect x="1" y="1" width="7" height="7" fill="none" stroke="#ddd" stroke-width="1.2"/><circle cx="14" cy="10" r="4.5" fill="none" stroke="#ddd" stroke-width="1.2" stroke-dasharray="2 1"/><path d="M2 19 L6 12 L10 19 Z" fill="none" stroke="#ddd" stroke-width="1.2"/></svg>
<svg style="left:268px;top:111px" width="19" height="19" viewBox="0 0 20 20" preserveAspectRatio="none"><rect x="3" y="3" width="14" height="14" fill="none" stroke="#ddd" stroke-width="1.2"/><rect x="5" y="5" width="10" height="10" fill="#222"/><rect x="1" y="1" width="3" height="3" fill="#ddd"/><rect x="16" y="1" width="3" height="3" fill="#ddd"/><rect x="1" y="16" width="3" height="3" fill="#ddd"/><rect x="16" y="16" width="3" height="3" fill="#ddd"/></svg>
<div class="a" style="left:43px;top:143px;width:261px;height:25px;background:#3f3f3f;"></div>
<svg style="left:47.5px;top:147.5px" width="13.0" height="13.0" viewBox="0 0 13.0 13.0"><circle cx="6.5" cy="6.5" r="6.5" fill="#a2a2a2"/><path d="M3.5 3.5 L9.5 9.5 M9.5 3.5 L3.5 9.5" stroke="#222" stroke-width="1.3"/></svg>
<div class="t" style="left:67px;top:147px;color:#f2f2f2;font-size:12px;">32.vstyler [RGB] [@46.4%]</div>
<div class="a" style="left:309px;top:143px;width:260px;height:25px;background:#474747;"></div>
<svg style="left:316px;top:149px" width="10" height="10" viewBox="0 0 10 10"><path d="M1.5 1.5 L8.5 8.5 M8.5 1.5 L1.5 8.5" stroke="#2a2a2a" stroke-width="1.4"/></svg>
<div class="t" style="left:333px;top:147px;color:#9a9a9a;font-size:12px;">1.vstyler [RGB] [@11.5%]</div>
<div class="a" style="left:575px;top:143px;width:261px;height:25px;background:#474747;"></div>
<svg style="left:582px;top:149px" width="10" height="10" viewBox="0 0 10 10"><path d="M1.5 1.5 L8.5 8.5 M8.5 1.5 L1.5 8.5" stroke="#2a2a2a" stroke-width="1.4"/></svg>
<div class="t" style="left:598px;top:147px;color:#9a9a9a;font-size:12px;">Untitled-1 [RGB] [@30.7%]XP</div>
<svg style="left:7.5px;top:148.5px" width="13.0" height="13.0" viewBox="0 0 13.0 13.0"><circle cx="6.5" cy="6.5" r="6.5" fill="#9c9c9c"/><path d="M3.5 3.5 L9.5 9.5 M9.5 3.5 L3.5 9.5" stroke="#222" stroke-width="1.3"/></svg>
<div class="a" style="left:6px;top:174px;width:29px;height:28px;background:#4a90d0;"></div>
<svg style="left:15px;top:177px" width="12" height="18" viewBox="0 0 20 20" preserveAspectRatio="none"><path d="M2 1 L18 10 L11 11 L15 19 L12 20 L8 12 L2 17 Z" fill="#dfe8f0" stroke="#dfe8f0" stroke-width="1"/></svg>
<svg style="left:28px;top:195px" width="6" height="6" viewBox="0 0 6 6"><path d="M6 0 V6 H0 Z" fill="#cfd8e0"/></svg>
<svg style="left:13px;top:212px" width="15" height="17" viewBox="0 0 20 20" preserveAspectRatio="none"><path d="M1 1 L19 9 L10 11 L7 19 Z" fill="#e0e0e0"/></svg>
<svg style="left:27px;top:228px" width="6" height="6" viewBox="0 0 6 6"><path d="M6 0 V6 H0 Z" fill="#bbb"/></svg>
<svg style="left:10px;top:245px" width="18" height="18" viewBox="0 0 20 20" preserveAspectRatio="none"><path d="M4 8 Q2 14 8 14 Q12 14 10 8 Q9 2 14 2 Q18 3 16 8" fill="none" stroke="#ddd" stroke-width="1.2"/><rect x="1" y="6" width="4" height="4" fill="none" stroke="#ddd"/><rect x="15" y="6" width="4" height="4" fill="none" stroke="#ddd"/><path d="M11 11 L18 15 L14 16 L13 19 Z" fill="none" stroke="#ddd" stroke-width="1.2"/></svg>
<svg style="left:27px;top:262px" width="6" height="6" viewBox="0 0 6 6"><path d="M6 0 V6 H0 Z" fill="#bbb"/></svg>
<svg style="left:10px;top:278px" width="20" height="18" viewBox="0 0 20 20" preserveAspectRatio="none"><path d="M1 3 L7 5 V16 L1 18 Z M19 3 L13 5 V16 L19 18 Z" fill="none" stroke="#ddd" stroke-width="1.5"/><path d="M10 5 V17" stroke="#bbb" stroke-dasharray="1.5 1"/><path d="M4 3 Q10 -1 16 2 M14 0 L16 2 L13 3" fill="none" stroke="#ddd" stroke-width="1.2"/></svg>
<svg style="left:27px;top:295px" width="6" height="6" viewBox="0 0 6 6"><path d="M6 0 V6 H0 Z" fill="#bbb"/></svg>
<div class="a" style="left:8px;top:307px;width:26px;height:27px;background:#333;"></div>
<svg style="left:11px;top:312px" width="19" height="16" viewBox="0 0 20 20" preserveAspectRatio="none"><rect x="1.5" y="1.5" width="17" height="17" fill="#2e2e2e" stroke="#eee" stroke-width="2" stroke-dasharray="3 2"/></svg>
<svg style="left:27px;top:328px" width="6" height="6" viewBox="0 0 6 6"><path d="M6 0 V6 H0 Z" fill="#bbb"/></svg>
<div class="a" style="left:9px;top:341px;width:24px;height:1px;background:#262626;"></div>
<svg style="left:11px;top:355px" width="18" height="17" viewBox="0 0 20 20" preserveAspectRatio="none"><path d="M3 17 L17 3" stroke="#ddd" stroke-width="1.2"/><circle cx="2.5" cy="17.5" r="1.8" fill="#444" stroke="#ddd"/><circle cx="17.5" cy="2.5" r="1.8" fill="#444" stroke="#ddd"/></svg>
<svg style="left:26px;top:370px" width="6" height="6" viewBox="0 0 6 6"><path d="M6 0 V6 H0 Z" fill="#bbb"/></svg>
<svg style="left:11px;top:389px" width="18" height="15" viewBox="0 0 20 20" preserveAspectRatio="none"><path d="M8 14 L16 4 L19 7 L11 16 Z" fill="#ddd"/><path d="M8 14 Q4 19 2 15 Q1 11 4 8 Q6 6 3 4" fill="none" stroke="#ddd" stroke-width="1.3"/></svg>
<svg style="left:26px;top:404px" width="6" height="6" viewBox="0 0 6 6"><path d="M6 0 V6 H0 Z" fill="#bbb"/></svg>
<svg style="left:10px;top:422px" width="20" height="16" viewBox="0 0 20 20" preserveAspectRatio="none"><ellipse cx="10" cy="10" rx="9" ry="8.5" fill="#606060" stroke="#eee" stroke-width="1.5"/></svg>
<svg style="left:26px;top:437px" width="6" height="6" viewBox="0 0 6 6"><path d="M6 0 V6 H0 Z" fill="#bbb"/></svg>
<div class="t" style="left:12px;top:450px;font-family:'Liberation Serif',serif;font-weight:bold;font-size:22px;line-height:24px;color:#eee">T</div>
<svg style="left:26px;top:470px" width="6" height="6" viewBox="0 0 6 6"><path d="M6 0 V6 H0 Z" fill="#bbb"/></svg>
<svg style="left:10px;top:488px" width="20" height="17" viewBox="0 0 20 20" preserveAspectRatio="none"><circle cx="7" cy="7" r="6" fill="#777" stroke="#ddd" stroke-width="1.2"/><rect x="6" y="7" width="9" height="10" fill="#666" stroke="#ddd" stroke-width="1.2"/><path d="M9 8 L18 15 L14 15.5 L13 19 Z" fill="#eee"/></svg>
<svg style="left:26px;top:503px" width="6" height="6" viewBox="0 0 6 6"><path d="M6 0 V6 H0 Z" fill="#bbb"/></svg>
<svg style="left:10px;top:520px" width="20" height="21" viewBox="0 0 20 20" preserveAspectRatio="none"><path d="M2 19 Q4 8 19 2 Q16 12 2 19 Z" fill="none" stroke="#ddd" stroke-width="1.3"/><rect x="3" y="3" width="3" height="3" fill="none" stroke="#ddd"/><circle cx="8" cy="10" r="1.3" fill="none" stroke="#ddd"/></svg>
<div class="a" style="left:9px;top:551px;width:24px;height:1px;background:#262626;"></div>
<svg style="left:10px;top:565px" width="20" height="17" viewBox="0 0 20 20" preserveAspectRatio="none"><path d="M2 3 Q10 1 18 4 L16 17 Q9 19 3 15 Z" fill="#777" stroke="#bbb" stroke-dasharray="1 1"/><circle cx="14" cy="10" r="2" fill="#fff"/></svg>
<svg style="left:10px;top:597px" width="20" height="18" viewBox="0 0 20 20" preserveAspectRatio="none"><circle cx="10" cy="10" r="8.5" fill="#666" stroke="#ccc" stroke-width="1.3"/><circle cx="10" cy="10" r="5" fill="#777"/></svg>
<svg style="left:10px;top:630px" width="20" height="18" viewBox="0 0 20 20" preserveAspectRatio="none"><path d="M3 3 L14 2 L19 8 L16 18 L4 17 L1 10 Z" fill="#777" stroke="#ccc"/></svg>
<svg style="left:10px;top:664px" width="20" height="17" viewBox="0 0 20 20" preserveAspectRatio="none"><path d="M1 5 Q10 2 19 5 L17 17 Q10 14 3 17 Z" fill="none" stroke="#bbb"/><path d="M4 8 H16 M4 12 H16 M7 4 V16 M12 4 V16" stroke="#999" stroke-width="0.8"/></svg>
<div class="a" style="left:9px;top:694px;width:24px;height:1px;background:#262626;"></div>
<svg style="left:10px;top:704px" width="20" height="22" viewBox="0 0 20 20" preserveAspectRatio="none"><rect x="1" y="1" width="14" height="20" fill="#cfcfcf"/><rect x="1" y="1" width="14" height="20" fill="url(#gr)"/><defs><linearGradient id="gr"><stop offset="0" stop-color="#fff"/><stop offset="1" stop-color="#555"/></linearGradient></defs></svg>
<svg style="left:10px;top:738px" width="20" height="20" viewBox="0 0 20 20" preserveAspectRatio="none"><circle cx="5" cy="5" r="4" fill="none" stroke="#999"/><rect x="11" y="1" width="8" height="8" fill="none" stroke="#999"/><path d="M1 12 H9 V19 H1 Z M12 19 L15 11 L19 19" fill="none" stroke="#999"/></svg>
<svg style="left:10px;top:771px" width="20" height="20" viewBox="0 0 20 20" preserveAspectRatio="none"><circle cx="8" cy="6" r="4" fill="#ddd"/><path d="M1 19 Q2 10 8 11 Q14 11 15 19 Z" fill="#ddd"/></svg>
<div class="a" style="left:9px;top:803px;width:24px;height:1px;background:#262626;"></div>
<svg style="left:10px;top:815px" width="20" height="21" viewBox="0 0 20 20" preserveAspectRatio="none"><circle cx="10" cy="10" r="9" fill="#666" stroke="#999"/><path d="M6 15 L15 4 L17 6 L8 17 Z" fill="#ddd"/></svg>
<svg style="left:10px;top:848px" width="20" height="20" viewBox="0 0 20 20" preserveAspectRatio="none"><path d="M4 1 V15 H19 M1 4 H15" fill="none" stroke="#ddd" stroke-width="1.3"/><rect x="6" y="5" width="9" height="9" fill="#555"/></svg>
<svg style="left:10px;top:880px" width="20" height="20" viewBox="0 0 20 20" preserveAspectRatio="none"><circle cx="8" cy="8" r="7" fill="none" stroke="#ddd" stroke-width="1.5"/><path d="M13 13 L18 18" stroke="#ddd" stroke-width="2"/></svg>
<svg style="left:1834px;top:175px" width="12" height="8" viewBox="0 0 12 8"><path d="M1 7 L6 1.5 L11 7" fill="none" stroke="#e0e0e0" stroke-width="1.6"/></svg>
<svg style="left:1834px;top:929px" width="12" height="8" viewBox="0 0 12 8"><path d="M1 1 L6 6.5 L11 1" fill="none" stroke="#e0e0e0" stroke-width="1.6"/></svg>
<svg style="left:1857px;top:146px" width="10" height="10" viewBox="0 0 10 10"><circle cx="5" cy="5" r="5" fill="#9a9a9a"/><path d="M2 2 L8 8 M8 2 L2 8" stroke="#222" stroke-width="1.3"/></svg>
<svg style="left:1869px;top:145px" width="12" height="12" viewBox="0 0 12 12"><path d="M5 1 L1 6 L5 11 M9 1 L5 6 L9 11" fill="none" stroke="#d0d0d0" stroke-width="1.1"/></svg>
<svg style="left:1878px;top:146px" width="12" height="10" viewBox="0 0 12 10"><path d="M1 2.5 H11 M1 7 H11" stroke="#888" stroke-width="1.6"/></svg>
<svg style="left:1863.0px;top:173.0px" width="18.0" height="18.0" viewBox="0 0 20 20" preserveAspectRatio="none"><defs><radialGradient id="rg"><stop offset="0" stop-color="#fff"/><stop offset="0.6" stop-color="#ccc"/><stop offset="1" stop-color="#555"/></radialGradient></defs><circle cx="10" cy="10" r="8" fill="url(#rg)"/><path d="M4 6 H16 M3 10 H17 M4 14 H16 M6 3 V17 M10 2 V18 M14 3 V17" stroke="#444" stroke-width="0.9"/></svg>
<svg style="left:1863.0px;top:204.0px" width="18.0" height="18.0" viewBox="0 0 20 20" preserveAspectRatio="none"><circle cx="10" cy="10" r="8.5" fill="none" stroke="#bbb" stroke-dasharray="1.2 1"/><rect x="5" y="6" width="4" height="8" fill="none" stroke="#ddd"/><rect x="11" y="6" width="4" height="8" fill="none" stroke="#ddd"/></svg>
<svg style="left:1863.0px;top:237.0px" width="18.0" height="18.0" viewBox="0 0 20 20" preserveAspectRatio="none"><rect x="1" y="3" width="18" height="14" fill="none" stroke="#ddd" stroke-width="1.3"/><path d="M3 9 H9 M3 12 H9" stroke="#bbb" stroke-width="1.5"/><rect x="11" y="6" width="6" height="8" fill="none" stroke="#ddd"/></svg>
<svg style="left:1863.0px;top:269.0px" width="18.0" height="18.0" viewBox="0 0 20 20" preserveAspectRatio="none"><rect x="1" y="3" width="18" height="14" fill="none" stroke="#ddd" stroke-width="1.3"/><path d="M2 15 L7 9 L11 13 L14 10 L18 15" fill="none" stroke="#ddd" stroke-width="1.2"/><circle cx="14" cy="7" r="1.5" fill="none" stroke="#ddd"/></svg>
<div class="a" style="left:1856px;top:299px;width:32px;height:1px;background:#3a3a3a;"></div>
<svg style="left:1863.0px;top:310.0px" width="18.0" height="18.0" viewBox="0 0 20 20" preserveAspectRatio="none"><rect x="1" y="1" width="5" height="5" fill="#eee"/><rect x="7.5" y="1" width="5" height="5" fill="#eee"/><rect x="14" y="1" width="5" height="5" fill="#eee"/><rect x="1" y="7.5" width="5" height="5" fill="#eee"/><rect x="7.5" y="7.5" width="5" height="5" fill="#eee"/><rect x="14" y="7.5" width="5" height="5" fill="#eee"/><rect x="1" y="14" width="5" height="5" fill="#eee"/><rect x="7.5" y="14" width="5" height="5" fill="#eee"/><rect x="14" y="14" width="5" height="5" fill="#eee"/></svg>
<div class="a" style="left:1856px;top:339px;width:32px;height:1px;background:#3a3a3a;"></div>
<svg style="left:1863.0px;top:350.0px" width="18.0" height="18.0" viewBox="0 0 20 20" preserveAspectRatio="none"><rect x="8" y="1" width="11" height="9" rx="1.5" fill="none" stroke="#eee" stroke-width="1.4"/><rect x="5" y="4" width="11" height="9" rx="1.5" fill="#444" stroke="#eee" stroke-width="1.4"/><circle cx="6" cy="14" r="5" fill="#444" stroke="#eee" stroke-width="1.4"/></svg>
<svg style="left:1863.0px;top:383.0px" width="18.0" height="18.0" viewBox="0 0 20 20" preserveAspectRatio="none"><rect x="5" y="5" width="14" height="14" rx="3" fill="#888" stroke="#bbb"/><rect x="3" y="3" width="14" height="14" rx="3" fill="#999" stroke="#bbb"/><rect x="1" y="1" width="14" height="14" rx="3" fill="#aaa" stroke="#ccc"/></svg>
<svg style="left:1863.0px;top:415.0px" width="18.0" height="18.0" viewBox="0 0 20 20" preserveAspectRatio="none"><path d="M2 18 Q2 2 10 2 Q18 2 18 18" fill="none" stroke="#eee" stroke-width="1.3"/><path d="M2 6 L18 6" stroke="#aaa" stroke-width="0.8"/><circle cx="10" cy="2.5" r="1.8" fill="#444" stroke="#eee"/><circle cx="2" cy="17" r="1.8" fill="#444" stroke="#eee"/><circle cx="18" cy="17" r="1.8" fill="#444" stroke="#eee"/></svg>
<div class="a" style="left:1859px;top:442px;width:27px;height:28px;background:#2f2f2f;"></div>
<svg style="left:1863.0px;top:447.0px" width="18.0" height="18.0" viewBox="0 0 20 20" preserveAspectRatio="none"><rect x="1" y="1" width="18" height="2.5" fill="#eee"/><rect x="2" y="4" width="4" height="6" fill="#eee"/><rect x="7" y="4" width="5" height="12" fill="#eee"/><rect x="13" y="4" width="5" height="10" fill="#eee"/><path d="M3 2 L4 7" stroke="#444"/></svg>
<div class="a" style="left:1856px;top:476px;width:32px;height:1px;background:#3a3a3a;"></div>
<svg style="left:1863.0px;top:488.0px" width="18.0" height="18.0" viewBox="0 0 20 20" preserveAspectRatio="none"><path d="M6 5 H3 Q1.5 5 1.5 6.5 V15 H8 M14 15 H17 Q18.5 15 18.5 13.5 V5 H12 M8 3 L10 5 L8 7 M12 13 L10 15 L12 17" fill="none" stroke="#eee" stroke-width="1.8"/></svg>
<div class="a" style="left:1856px;top:517px;width:32px;height:1px;background:#3a3a3a;"></div>
<svg style="left:1863.0px;top:528.0px" width="18.0" height="18.0" viewBox="0 0 20 20" preserveAspectRatio="none"><rect x="3" y="2" width="14" height="9" rx="4.5" fill="none" stroke="#eee" stroke-width="1.8"/><path d="M1 7 H19" stroke="#eee" stroke-width="1.8"/><path d="M2 17 H18" stroke="#eee" stroke-width="2" stroke-dasharray="2 2"/></svg>
<div class="a" style="left:1856px;top:557px;width:32px;height:1px;background:#3a3a3a;"></div>
<svg style="left:1863.0px;top:569.0px" width="18.0" height="18.0" viewBox="0 0 20 20" preserveAspectRatio="none"><rect x="1" y="2" width="18" height="3.5" rx="1.5" fill="#eee"/><rect x="1" y="8" width="18" height="3.5" rx="1.5" fill="#eee"/><rect x="1" y="14" width="18" height="3.5" rx="1.5" fill="#eee"/></svg>
<div class="a" style="left:1856px;top:598px;width:32px;height:1px;background:#3a3a3a;"></div>
<svg style="left:1863.0px;top:610.0px" width="18.0" height="18.0" viewBox="0 0 20 20" preserveAspectRatio="none"><path d="M10 1 L17 9 L10 17 L3 9 Z" fill="none" stroke="#eee" stroke-width="1.5"/><path d="M1 7 Q10 0 19 7" fill="none" stroke="#eee" stroke-dasharray="1.5 1"/><rect x="8" y="0" width="4" height="3" fill="#eee"/><rect x="0" y="7" width="3" height="3" fill="#eee"/><rect x="17" y="7" width="3" height="3" fill="#eee"/><path d="M10 17 V20 M7 20 H13" stroke="#eee" stroke-width="1.5"/></svg>
<div class="a" style="left:1856px;top:639px;width:32px;height:1px;background:#3a3a3a;"></div>
<svg style="left:1863.0px;top:651.0px" width="18.0" height="18.0" viewBox="0 0 20 20" preserveAspectRatio="none"><rect x="6" y="1" width="10" height="10" fill="#eee"/><path d="M2 6 V16 H12" fill="none" stroke="#ccc"/><path d="M13 13 Q16 10 18 13 Q19 16 16 19" fill="none" stroke="#eee" stroke-width="1.4"/></svg>
<svg style="left:1863.0px;top:683.0px" width="18.0" height="18.0" viewBox="0 0 20 20" preserveAspectRatio="none"><path d="M2 11 L6 2 L10 11 Z" fill="#eee"/><circle cx="8" cy="9" r="4" fill="none" stroke="#eee" stroke-width="1.3"/><path d="M12 13 Q15 10 18 13 Q19 16 16 19 M11 16 Q13 19 15 18" fill="none" stroke="#eee" stroke-width="1.4"/></svg>
<div class="a" style="left:1856px;top:712px;width:32px;height:1px;background:#3a3a3a;"></div>
<svg style="left:1863.0px;top:725.0px" width="18.0" height="18.0" viewBox="0 0 20 20" preserveAspectRatio="none"><path d="M2 18 L12 8" stroke="#eee" stroke-width="3"/><path d="M14 1 L15.5 4.5 L19 5 L16 8 L17 12 L14 10 L11 12 L12 8 L9 5 L13 4.5 Z" fill="#eee"/></svg>
<svg style="left:1898px;top:149px" width="16" height="10" viewBox="0 0 20 20" preserveAspectRatio="none"><circle cx="2" cy="4" r="1.5" fill="#ddd"/><circle cx="7.3" cy="4" r="1.5" fill="#ddd"/><circle cx="12.6" cy="4" r="1.5" fill="#ddd"/><circle cx="18" cy="4" r="1.5" fill="#ddd"/><circle cx="2" cy="14" r="1.5" fill="#ddd"/><circle cx="7.3" cy="14" r="1.5" fill="#ddd"/><circle cx="12.6" cy="14" r="1.5" fill="#ddd"/><circle cx="18" cy="14" r="1.5" fill="#ddd"/></svg>
<svg style="left:1898px;top:168px" width="16" height="16" viewBox="0 0 20 20" preserveAspectRatio="none"><circle cx="3.5" cy="4.5" r="2.5" fill="none" stroke="#ddd" stroke-width="1.5"/><circle cx="3.5" cy="14.5" r="2.5" fill="none" stroke="#ddd" stroke-width="1.5"/><path d="M8 2 H19 M8 6.5 H19 M8 12 H19 M8 16.5 H19" stroke="#ddd" stroke-width="1.5"/></svg>
<div class="a" style="left:1897px;top:187px;width:20px;height:36px;background:#ffffff;"></div>
<svg style="left:1897px;top:187px" width="20" height="19" viewBox="0 0 20 19"><path d="M3 16 L18 3" stroke="#e03030" stroke-width="1"/></svg>
<div class="a" style="left:1897px;top:223px;width:20px;height:18px;background:#000000;"></div>
<div class="a" style="left:1897px;top:241px;width:20px;height:18px;background:#e8e8e8;"></div>
<div class="a" style="left:1897px;top:259px;width:20px;height:18px;background:#d0d0d0;"></div>
<div class="a" style="left:1897px;top:277px;width:20px;height:18px;background:#b8b8b8;"></div>
<div class="a" style="left:1897px;top:295px;width:20px;height:18px;background:#a0a0a0;"></div>
<div class="a" style="left:1897px;top:313px;width:20px;height:18px;background:#888888;"></div>
<div class="a" style="left:1897px;top:331px;width:20px;height:18px;background:#707070;"></div>
<div class="a" style="left:1897px;top:349px;width:20px;height:18px;background:#585858;"></div>
<div class="a" style="left:1897px;top:367px;width:20px;height:17px;background:#404040;"></div>
<div class="a" style="left:1897px;top:384px;width:20px;height:18px;background:#262626;"></div>
<div class="a" style="left:1897px;top:402px;width:20px;height:18px;background:#f24a2e;"></div>
<div class="a" style="left:1897px;top:420px;width:20px;height:18px;background:#f35436;"></div>
<div class="a" style="left:1897px;top:438px;width:20px;height:18px;background:#f45e40;"></div>
<div class="a" style="left:1897px;top:456px;width:20px;height:18px;background:#f5694c;"></div>
<div class="a" style="left:1897px;top:474px;width:20px;height:17px;background:#f67a5e;"></div>
<div class="a" style="left:1897px;top:491px;width:20px;height:18px;background:#0e9270;"></div>
<div class="a" style="left:1897px;top:509px;width:20px;height:18px;background:#26a27e;"></div>
<div class="a" style="left:1897px;top:527px;width:20px;height:18px;background:#44b48e;"></div>
<div class="a" style="left:1897px;top:545px;width:20px;height:18px;background:#62c49e;"></div>
<div class="a" style="left:1897px;top:563px;width:20px;height:20px;background:#86d6b0;"></div>
<div class="a" style="left:1897px;top:583px;width:20px;height:18px;background:#1164c2;"></div>
<div class="a" style="left:1897px;top:601px;width:20px;height:18px;background:#1a78d8;"></div>
<div class="a" style="left:1897px;top:619px;width:20px;height:18px;background:#3a8fe0;"></div>
<div class="a" style="left:1897px;top:637px;width:20px;height:18px;background:#6aaee8;"></div>
<div class="a" style="left:1897px;top:655px;width:20px;height:18px;background:#a4ccf2;"></div>
<div class="a" style="left:1897px;top:673px;width:20px;height:18px;background:#e67a22;"></div>
<div class="a" style="left:1897px;top:691px;width:20px;height:18px;background:#ee8e2c;"></div>
<div class="a" style="left:1897px;top:709px;width:20px;height:18px;background:#f2a434;"></div>
<div class="a" style="left:1897px;top:727px;width:20px;height:18px;background:#f4bc3c;"></div>
<div class="a" style="left:1897px;top:745px;width:20px;height:18px;background:#f8cf48;"></div>
<div class="a" style="left:1897px;top:763px;width:20px;height:18px;background:#7a4a9e;"></div>
<div class="a" style="left:1897px;top:781px;width:20px;height:18px;background:#9858b4;"></div>
<div class="a" style="left:1897px;top:799px;width:20px;height:18px;background:#ae6cc4;"></div>
<div class="a" style="left:1897px;top:817px;width:20px;height:18px;background:#cc86d6;"></div>
<div class="a" style="left:1897px;top:835px;width:20px;height:18px;background:#e6a6e6;"></div>
<div class="a" style="left:1897px;top:853px;width:20px;height:18px;background:#86583c;"></div>
<div class="a" style="left:1897px;top:871px;width:20px;height:18px;background:#9e6e54;"></div>
<div class="a" style="left:1897px;top:889px;width:20px;height:18px;background:#b48a6c;"></div>
<div class="a" style="left:1897px;top:907px;width:20px;height:18px;background:#c6a286;"></div>
<div class="a" style="left:1897px;top:925px;width:20px;height:10px;background:#d6b89e;"></div>
<svg style="left:1898px;top:938px" width="16" height="15" viewBox="0 0 20 20" preserveAspectRatio="none"><path d="M2 1 H18 Q19 1 19 2 V13 Q19 14 18 14 H12 L10 17 L8 14 H2 Q1 14 1 13 V2 Q1 1 2 1 Z" fill="none" stroke="#ddd" stroke-width="1.2"/><path d="M4 5 H16 M4 8 H16 M4 11 H16" stroke="#aaa" stroke-width="1.2"/></svg>
<div class="a" style="left:1591px;top:345px;width:261px;height:303px;background:#454545;border:1px solid #3a3a3a"></div>
<div class="a" style="left:1592px;top:346px;width:259px;height:24px;background:#393939;"></div>
<div class="t" style="left:1617px;top:351px;color:#9a9a9a;font-size:12px;">Shadow</div>
<div class="t" style="left:1684px;top:351px;color:#9a9a9a;font-size:12px;">Path</div>
<div class="a" style="left:1719px;top:346px;width:77px;height:24px;background:#454545;border-top:1px solid #555;border-left:1px solid #555;border-right:1px solid #3a3a3a"></div>
<div class="a" style="left:1592px;top:369px;width:127px;height:1px;background:#555;"></div>
<div class="a" style="left:1796px;top:369px;width:55px;height:1px;background:#555;"></div>
<svg style="left:1723px;top:352px" width="8" height="11" viewBox="0 0 8 11"><path d="M1 4 L4 1 L7 4 M1 7 L4 10 L7 7" fill="none" stroke="#ddd" stroke-width="1.1"/></svg>
<div class="t" style="left:1734px;top:351px;color:#f2f2f2;font-size:12px;">Alignment</div>
<div class="a" style="left:1807px;top:347px;width:17px;height:22px;background:#555;"></div>
<svg style="left:1812px;top:354px" width="6" height="7" viewBox="0 0 6 7"><path d="M0 0 L6 3.5 L0 7 Z" fill="#ddd"/></svg>
<svg style="left:1830px;top:351px" width="14" height="12" viewBox="0 0 14 12"><path d="M1 1.5 H13 M1 6 H13 M1 10.5 H13" stroke="#ddd" stroke-width="1.4"/></svg>
<div class="t" style="left:1601px;top:379px;color:#f0f0f0;font-size:12px;">Align Positions</div>
<svg style="left:1607px;top:404px" width="20" height="20" viewBox="0 0 20 20" preserveAspectRatio="none"><path d="M2 1 V19" stroke="#d8d8d8" stroke-width="2"/><rect x="4" y="3" width="9" height="6" fill="#9a9a9a"/><rect x="4" y="11" width="15" height="6" fill="#9a9a9a"/></svg>
<svg style="left:1637px;top:404px" width="20" height="20" viewBox="0 0 20 20" preserveAspectRatio="none"><rect x="5" y="2" width="10" height="6" fill="#9a9a9a"/><rect x="2" y="11" width="16" height="7" fill="#9a9a9a"/><path d="M10 0 V20" stroke="#d8d8d8" stroke-width="2"/></svg>
<svg style="left:1666px;top:404px" width="20" height="20" viewBox="0 0 20 20" preserveAspectRatio="none"><path d="M18 1 V19" stroke="#d8d8d8" stroke-width="2"/><rect x="7" y="3" width="9" height="6" fill="#9a9a9a"/><rect x="1" y="11" width="15" height="6" fill="#9a9a9a"/></svg>
<svg style="left:1697px;top:404px" width="20" height="20" viewBox="0 0 20 20" preserveAspectRatio="none"><rect x="2" y="9" width="7" height="8" fill="#9a9a9a"/><rect x="11" y="2" width="7" height="8" fill="#9a9a9a"/><path d="M10 0 V20" stroke="#d8d8d8" stroke-width="2"/></svg>
<svg style="left:1727px;top:404px" width="20" height="20" viewBox="0 0 20 20" preserveAspectRatio="none"><path d="M1 2 H19" stroke="#d8d8d8" stroke-width="2"/><rect x="3" y="4" width="6" height="15" fill="#9a9a9a"/><rect x="11" y="4" width="6" height="9" fill="#9a9a9a"/></svg>
<svg style="left:1757px;top:404px" width="20" height="20" viewBox="0 0 20 20" preserveAspectRatio="none"><rect x="2" y="3" width="7" height="15" fill="#9a9a9a"/><rect x="11" y="5" width="7" height="10" fill="#9a9a9a"/><path d="M0 10 H20" stroke="#d8d8d8" stroke-width="2"/></svg>
<svg style="left:1787px;top:404px" width="20" height="20" viewBox="0 0 20 20" preserveAspectRatio="none"><path d="M1 18 H19" stroke="#d8d8d8" stroke-width="2"/><rect x="3" y="2" width="6" height="14" fill="#9a9a9a"/><rect x="11" y="7" width="6" height="9" fill="#9a9a9a"/></svg>
<svg style="left:1817px;top:404px" width="20" height="20" viewBox="0 0 20 20" preserveAspectRatio="none"><rect x="9" y="1" width="8" height="8" fill="#9a9a9a"/><rect x="3" y="11" width="8" height="8" fill="#9a9a9a"/><path d="M1 10 H19" stroke="#d8d8d8" stroke-width="2"/></svg>
<div class="a" style="left:1600px;top:437px;width:243px;height:1px;background:#393939;"></div>
<div class="t" style="left:1601px;top:446px;color:#f0f0f0;font-size:12px;">Distribute</div>
<svg style="left:1607px;top:472px" width="20" height="20" viewBox="0 0 20 20" preserveAspectRatio="none"><path d="M2 2 V18" stroke="#d8d8d8" stroke-width="2"/><path d="M9 2 V18" stroke="#d8d8d8" stroke-width="2"/><rect x="3" y="5" width="6" height="10" fill="#9a9a9a"/><rect x="11" y="5" width="7" height="10" fill="#9a9a9a"/><path d="M16 2 V18" stroke="#d8d8d8" stroke-width="2"/></svg>
<svg style="left:1637px;top:472px" width="20" height="20" viewBox="0 0 20 20" preserveAspectRatio="none"><path d="M4 2 V18" stroke="#d8d8d8" stroke-width="2"/><path d="M10 2 V18" stroke="#d8d8d8" stroke-width="2"/><rect x="3" y="5" width="6" height="10" fill="#9a9a9a"/><rect x="11" y="5" width="7" height="10" fill="#9a9a9a"/><path d="M16 2 V18" stroke="#d8d8d8" stroke-width="2"/></svg>
<svg style="left:1666px;top:472px" width="20" height="20" viewBox="0 0 20 20" preserveAspectRatio="none"><path d="M4 2 V18" stroke="#d8d8d8" stroke-width="2"/><path d="M10 2 V18" stroke="#d8d8d8" stroke-width="2"/><rect x="3" y="5" width="6" height="10" fill="#9a9a9a"/><rect x="11" y="5" width="7" height="10" fill="#9a9a9a"/><path d="M18 2 V18" stroke="#d8d8d8" stroke-width="2"/></svg>
<svg style="left:1697px;top:472px" width="20" height="20" viewBox="0 0 20 20" preserveAspectRatio="none"><path d="M2 2 V18" stroke="#d8d8d8" stroke-width="2"/><path d="M10 2 V18" stroke="#d8d8d8" stroke-width="2"/><rect x="3" y="5" width="6" height="10" fill="#9a9a9a"/><rect x="11" y="5" width="7" height="10" fill="#9a9a9a"/><path d="M18 2 V18" stroke="#d8d8d8" stroke-width="2"/></svg>
<svg style="left:1727px;top:472px" width="20" height="20" viewBox="0 0 20 20" preserveAspectRatio="none"><rect x="5" y="3" width="10" height="6" fill="#9a9a9a"/><rect x="5" y="11" width="10" height="7" fill="#9a9a9a"/><path d="M1 2 H19" stroke="#d8d8d8" stroke-width="2"/><path d="M1 9 H19" stroke="#d8d8d8" stroke-width="2"/><path d="M1 16 H19" stroke="#d8d8d8" stroke-width="2"/></svg>
<svg style="left:1757px;top:472px" width="20" height="20" viewBox="0 0 20 20" preserveAspectRatio="none"><rect x="5" y="3" width="10" height="6" fill="#9a9a9a"/><rect x="5" y="11" width="10" height="7" fill="#9a9a9a"/><path d="M1 4 H19" stroke="#d8d8d8" stroke-width="2"/><path d="M1 10 H19" stroke="#d8d8d8" stroke-width="2"/><path d="M1 16 H19" stroke="#d8d8d8" stroke-width="2"/></svg>
<svg style="left:1787px;top:472px" width="20" height="20" viewBox="0 0 20 20" preserveAspectRatio="none"><rect x="5" y="3" width="10" height="6" fill="#9a9a9a"/><rect x="5" y="11" width="10" height="7" fill="#9a9a9a"/><path d="M1 4 H19" stroke="#d8d8d8" stroke-width="2"/><path d="M1 10 H19" stroke="#d8d8d8" stroke-width="2"/><path d="M1 18 H19" stroke="#d8d8d8" stroke-width="2"/></svg>
<svg style="left:1817px;top:472px" width="20" height="20" viewBox="0 0 20 20" preserveAspectRatio="none"><rect x="5" y="3" width="10" height="6" fill="#9a9a9a"/><rect x="5" y="11" width="10" height="7" fill="#9a9a9a"/><path d="M1 3 H19" stroke="#d8d8d8" stroke-width="2"/><path d="M1 10 H19" stroke="#d8d8d8" stroke-width="2"/><path d="M1 17 H19" stroke="#d8d8d8" stroke-width="2"/></svg>
<div class="a" style="left:1600px;top:503px;width:243px;height:1px;background:#393939;"></div>
<div class="t" style="left:1620px;top:513px;width:54px;text-align:right">Angle</div>
<div class="a" style="left:1681px;top:511px;width:79px;height:20px;background:#343434;"></div>
<div class="t" style="left:1685px;top:514px;color:#f0f0f0;font-size:12px;">0°</div>
<div class="a" style="left:1761px;top:511px;width:13px;height:20px;background:#555;"></div>
<svg style="left:1761px;top:511px" width="13" height="20" viewBox="0 0 13 20"><path d="M2.5 7.5 L6.5 3.5 L10.5 7.5 M2.5 12.5 L6.5 16.5 L10.5 12.5" fill="none" stroke="#d0d0d0" stroke-width="1.4"/></svg>
<div class="t" style="left:1620px;top:537px;width:54px;text-align:right">Space</div>
<div class="a" style="left:1681px;top:535px;width:80px;height:20px;background:#343434;"></div>
<div class="t" style="left:1685px;top:538px;color:#f0f0f0;font-size:12px;">0 pt</div>
<div class="a" style="left:1684px;top:561px;width:14px;height:15px;background:#666;border:1px solid #555"></div>
<div class="t" style="left:1703px;top:562px;color:#f0f0f0;font-size:12px;">Sticky Groups</div>
<div class="a" style="left:1684px;top:585px;width:14px;height:15px;background:#2f6fc8;border:1px solid #5588cc"></div>
<svg style="left:1685px;top:587px" width="12" height="11" viewBox="0 0 12 11"><path d="M2 5.5 L5 9 L10.5 2" fill="none" stroke="#fff" stroke-width="1.8"/></svg>
<div class="t" style="left:1703px;top:586px;color:#f0f0f0;font-size:12px;">Viewing Angle</div>
<div class="a" style="left:1600px;top:609px;width:243px;height:1px;background:#393939;"></div>
<div class="a" style="left:1601px;top:617px;width:21px;height:22px;background:#4a90d0;"></div>
<svg style="left:1602px;top:618px" width="19" height="20" viewBox="0 0 20 20" preserveAspectRatio="none"><rect x="4" y="4" width="12" height="12" fill="none" stroke="#fff" stroke-width="1.6"/><path d="M1 5 V1 H5 M15 1 H19 V5 M19 15 V19 H15 M5 19 H1 V15" fill="none" stroke="#fff" stroke-width="1.2"/></svg>
<svg style="left:1629px;top:618px" width="20" height="20" viewBox="0 0 20 20" preserveAspectRatio="none"><rect x="1" y="1" width="18" height="18" fill="none" stroke="#ccc" stroke-width="1"/><circle cx="13" cy="7" r="3.5" fill="none" stroke="#eee" stroke-width="1.8"/><path d="M11 9 L4 16 M6 14 L8 16" stroke="#eee" stroke-width="1.8"/></svg>
<svg style="left:1658px;top:619px" width="18" height="18" viewBox="0 0 20 20" preserveAspectRatio="none"><path d="M3 1 H12 L17 6 V19 H3 Z M12 1 V6 H17 M6 9 H14 M6 12 H14 M6 15 H14" fill="none" stroke="#ddd" stroke-width="1.2"/></svg>
<svg style="left:1767px;top:618px" width="20" height="20" viewBox="0 0 20 20" preserveAspectRatio="none"><rect x="1" y="1" width="18" height="18" fill="none" stroke="#aaa" stroke-dasharray="2 2"/><path d="M5 15 L10 5 L15 15 Z" fill="#888" stroke="#ccc"/><circle cx="12" cy="12" r="4" fill="#777" stroke="#ccc"/></svg>
<div class="a" style="left:1794px;top:617px;width:22px;height:22px;background:#4a90d0;"></div>
<svg style="left:1795px;top:618px" width="20" height="20" viewBox="0 0 20 20" preserveAspectRatio="none"><path d="M4 14 L10 4 L16 14 Z" fill="#555" stroke="#eee"/><circle cx="12" cy="13" r="4" fill="#888" stroke="#eee"/></svg>
<svg style="left:1823px;top:618px" width="20" height="20" viewBox="0 0 20 20" preserveAspectRatio="none"><path d="M2 1 V19 H19" fill="none" stroke="#ccc"/><path d="M5 15 L10 5 L15 15 Z" fill="#888" stroke="#ccc"/><circle cx="12" cy="12" r="4" fill="#777" stroke="#ccc"/></svg>
<div class="a" style="left:43px;top:943px;width:222px;height:16px;background:#6a6a6a;"></div>
<svg style="left:251px;top:947px" width="12" height="8" viewBox="0 0 12 8"><path d="M1 1 L6 6 L11 1" fill="none" stroke="#ddd" stroke-width="1.4"/></svg>
<div class="a" style="left:265px;top:943px;width:34px;height:16px;background:#3a3a3a;"></div>
<svg style="left:268px;top:946px" width="10" height="10" viewBox="0 0 10 10"><path d="M1 0.5 L8.5 5 L1 9.5 Z" fill="#eee"/></svg>
<svg style="left:283px;top:946px" width="12" height="10" viewBox="0 0 12 10"><path d="M1 0.5 L7.5 5 L1 9.5 Z" fill="#eee"/><rect x="9" y="0.5" width="2" height="9" fill="#eee"/></svg>
<div class="a" style="left:299px;top:943px;width:180px;height:16px;background:#6a6a6a;"></div>
<div class="t" style="left:305px;top:945px;color:#f0f0f0;font-size:12px;">64 items</div>
<svg style="left:462px;top:947px" width="12" height="8" viewBox="0 0 12 8"><path d="M1 1 L6 6 L11 1" fill="none" stroke="#eee" stroke-width="1.4"/></svg>
<div class="a" style="left:482px;top:945px;width:14px;height:13px;background:#888;border-radius:2px"></div>
<svg style="left:484px;top:946px" width="10" height="11" viewBox="0 0 10 11"><path d="M1 1.5 H9" stroke="#333" stroke-width="1.4"/><path d="M5 3.5 V9.5 M2.5 7 L5 9.5 L7.5 7" fill="none" stroke="#333" stroke-width="1.3"/></svg>
<svg style="left:503px;top:944px" width="8" height="14" viewBox="0 0 8 14"><path d="M7 1 L1.5 7 L7 13" fill="none" stroke="#ddd" stroke-width="1.5"/></svg>
<div class="a" style="left:688px;top:944px;width:129px;height:14px;background:#7a7a7a;border-radius:4px"></div>
<svg style="left:1817px;top:944px" width="8" height="14" viewBox="0 0 8 14"><path d="M1 1 L6.5 7 L1 13" fill="none" stroke="#ddd" stroke-width="1.5"/></svg>
<svg style="left:1832px;top:944px" width="14" height="13" viewBox="0 0 14 13"><rect x="1" y="1" width="11" height="11" fill="none" stroke="#eee" stroke-width="1"/><path d="M6.5 0 V13 M0 6.5 H13" stroke="#bbb" stroke-width="1" stroke-dasharray="2 2"/></svg>
<svg style="left:8.5px;top:969.5px" width="13.0" height="13.0" viewBox="0 0 13.0 13.0"><circle cx="6.5" cy="6.5" r="6.5" fill="#9c9c9c"/><path d="M3.5 3.5 L9.5 9.5 M9.5 3.5 L3.5 9.5" stroke="#222" stroke-width="1.3"/></svg>
<div class="a" style="left:9px;top:989px;width:15px;height:1px;background:#777;"></div>
<div class="a" style="left:9px;top:993px;width:15px;height:1px;background:#777;"></div>
<svg style="left:9px;top:1002px" width="13" height="10" viewBox="0 0 13 10"><path d="M5 1 L1 5 L5 9 M8 1 L12 5 L8 9" fill="none" stroke="#ddd" stroke-width="1.3"/></svg>
<svg style="left:10px;top:1020px" width="12" height="13" viewBox="0 0 12 13"><path d="M1 0 V13 M4.5 0 V13 M8 0 V13 M11 0 V13" stroke="#aaa" stroke-width="1.2"/></svg>
<div class="a" style="left:240px;top:977px;width:73px;height:18px;background:#383838;"></div>
<div class="t" style="left:245px;top:980px;color:#f0f0f0;font-size:12px;">74.37 mm</div>
<div class="a" style="left:240px;top:1007px;width:73px;height:18px;background:#383838;"></div>
<div class="t" style="left:245px;top:1010px;color:#f0f0f0;font-size:12px;">89.43 mm</div>
<svg style="left:316px;top:979px" width="14" height="14" viewBox="0 0 14 14"><circle cx="7" cy="7" r="5.5" fill="none" stroke="#e0e0e0" stroke-width="1.3"/></svg>
<svg style="left:316px;top:1009px" width="14" height="14" viewBox="0 0 14 14"><circle cx="7" cy="7" r="5.5" fill="none" stroke="#e0e0e0" stroke-width="1.3"/></svg>
<svg style="left:339px;top:991px" width="16" height="20" viewBox="0 0 16 20"><path d="M4 3 Q8 -1 11 3 L9 8 M6 11 L4 16 Q7 20 11 17 M2 2 L14 18" fill="none" stroke="#ddd" stroke-width="1.3"/></svg>
<svg style="left:380px;top:980px" width="14" height="12" viewBox="0 0 14 12"><path d="M1 1 V11 M13 1 V11 M2 6 H12 M4 3 L1.5 6 L4 9 M10 3 L12.5 6 L10 9" fill="none" stroke="#ddd" stroke-width="1.4"/></svg>
<svg style="left:380px;top:1009px" width="12" height="15" viewBox="0 0 12 15"><path d="M1 1 H11 M1 14 H11 M6 2 V13 M3 4 L6 1.5 L9 4 M3 11 L6 13.5 L9 11" fill="none" stroke="#ddd" stroke-width="1.4"/></svg>
<div class="a" style="left:402px;top:977px;width:78px;height:18px;background:#383838;"></div>
<div class="t" style="left:407px;top:980px;color:#f0f0f0;font-size:12px;">100%</div>
<div class="a" style="left:402px;top:1007px;width:78px;height:18px;background:#383838;"></div>
<div class="t" style="left:407px;top:1010px;color:#f0f0f0;font-size:12px;">100%</div>
<svg style="left:494px;top:979px" width="16" height="14" viewBox="0 0 16 14"><path d="M2 2 H8 L3 12 H9 M8 2 H14 L9 12 H15" fill="none" stroke="#999" stroke-width="1.1"/></svg>
<svg style="left:494px;top:1008px" width="16" height="15" viewBox="0 0 16 15"><path d="M2 13 V3 L8 9 V2 M8 13 V3 L14 9 V2" fill="none" stroke="#999" stroke-width="1.1"/></svg>
<div class="a" style="left:516px;top:977px;width:61px;height:18px;background:#383838;"></div>
<div class="t" style="left:521px;top:980px;color:#f0f0f0;font-size:12px;">0°</div>
<div class="a" style="left:577px;top:977px;width:13px;height:18px;background:#555;"></div>
<svg style="left:577px;top:977px" width="13" height="18" viewBox="0 0 13 18"><path d="M2.5 6.5 L6.5 2.5 L10.5 6.5 M2.5 11.5 L6.5 15.5 L10.5 11.5" fill="none" stroke="#d0d0d0" stroke-width="1.4"/></svg>
<div class="a" style="left:516px;top:1007px;width:61px;height:18px;background:#383838;"></div>
<div class="t" style="left:521px;top:1010px;color:#f0f0f0;font-size:12px;">0°</div>
<div class="a" style="left:577px;top:1007px;width:13px;height:18px;background:#555;"></div>
<svg style="left:577px;top:1007px" width="13" height="18" viewBox="0 0 13 18"><path d="M2.5 6.5 L6.5 2.5 L10.5 6.5 M2.5 11.5 L6.5 15.5 L10.5 11.5" fill="none" stroke="#d0d0d0" stroke-width="1.4"/></svg>
<svg style="left:598px;top:980px" width="14" height="14" viewBox="0 0 14 14"><path d="M1 13 H13 M1 13 L10 3 M6 8 Q9 10 8 13" fill="none" stroke="#999" stroke-width="1.1"/></svg>
<div class="a" style="left:620px;top:977px;width:80px;height:18px;background:#383838;"></div>
<div class="t" style="left:625px;top:980px;color:#f0f0f0;font-size:12px;">0°</div>
<div class="a" style="left:700px;top:977px;width:13px;height:18px;background:#555;"></div>
<svg style="left:700px;top:977px" width="13" height="18" viewBox="0 0 13 18"><path d="M2.5 6.5 L6.5 2.5 L10.5 6.5 M2.5 11.5 L6.5 15.5 L10.5 11.5" fill="none" stroke="#d0d0d0" stroke-width="1.4"/></svg>
<div class="a" style="left:605px;top:1008px;width:14px;height:15px;background:#666;border:1px solid #555"></div>
<div class="t" style="left:623px;top:1009px;color:#f0f0f0;font-size:12px;">Each</div>
<svg style="left:720px;top:980px" width="16" height="12" viewBox="0 0 16 12"><path d="M1 6 H15 M4 3 L1 6 L4 9 M12 3 L15 6 L12 9" fill="none" stroke="#aaa" stroke-width="1.1"/></svg>
<svg style="left:723px;top:1008px" width="10" height="16" viewBox="0 0 10 16"><path d="M5 1 V15 M2 4 L5 1 L8 4 M2 12 L5 15 L8 12" fill="none" stroke="#aaa" stroke-width="1.1"/></svg>
<div class="a" style="left:744px;top:977px;width:79px;height:18px;background:#383838;"></div>
<div class="t" style="left:749px;top:980px;color:#f0f0f0;font-size:12px;">0 mm</div>
<div class="a" style="left:744px;top:1007px;width:79px;height:18px;background:#383838;"></div>
<div class="t" style="left:749px;top:1010px;color:#f0f0f0;font-size:12px;">0 mm</div>
<div class="a" style="left:1569px;top:1014px;width:157px;height:25px;background:#ffffff;border-radius:2px"></div>
<svg style="left:1548px;top:1010px" width="32" height="30" viewBox="0 0 32 30"><path d="M4 4 Q14 0 28 2 Q31 14 27 28 Q14 31 3 27 Q0 15 4 4 Z" fill="#f05a22"/><path d="M21 9 Q16 6 11 8 Q7 11 12 14 Q19 16 19 19 Q17 23 9 21" fill="none" stroke="#fff" stroke-width="3.4" stroke-linecap="round"/></svg>
<div class="t" style="left:1586px;top:1018px;font-size:14px;line-height:16px;color:#1a5cc8;font-weight:bold">英</div>
<svg style="left:1608px;top:1019px" width="14" height="14" viewBox="0 0 14 14"><circle cx="3" cy="4" r="1.6" fill="#1a5cc8"/><path d="M9 6 Q11 9 8 12" fill="none" stroke="#1a5cc8" stroke-width="1.8"/></svg>
<svg style="left:1636px;top:1016px" width="14" height="18" viewBox="0 0 14 18"><rect x="4.5" y="1" width="5" height="10" rx="2.5" fill="#1a5cc8"/><path d="M2 8 Q2 14 7 14 Q12 14 12 8 M7 14 V17" fill="none" stroke="#1a5cc8" stroke-width="1.6"/></svg>
<svg style="left:1659px;top:1018px" width="16" height="13" viewBox="0 0 16 13"><rect x="1" y="1" width="14" height="11" fill="none" stroke="#1a5cc8" stroke-width="1.5"/><path d="M3.5 4 H12.5 M3.5 6.5 H12.5 M4.5 9 H11.5" stroke="#1a5cc8" stroke-width="1.3" stroke-dasharray="1.5 1"/></svg>
<svg style="left:1682px;top:1017px" width="18" height="16" viewBox="0 0 18 16"><path d="M5 1 L1 4 L3 8 L5 7 V15 H13 V7 L15 8 L17 4 L13 1 Q9 4 5 1 Z" fill="#6a5ad8"/></svg>
<svg style="left:1707px;top:1017px" width="16" height="16" viewBox="0 0 16 16"><rect x="1" y="1" width="6" height="6" rx="1.5" fill="#1a5cc8"/><rect x="9" y="1" width="6" height="6" rx="1.5" fill="#1a5cc8"/><rect x="1" y="9" width="6" height="6" rx="1.5" fill="#1a5cc8"/><rect x="9" y="9" width="6" height="6" rx="1.5" fill="#1a5cc8"/></svg>
<svg style="left:0px;top:0px" width="1920" height="1040" viewBox="0 0 1920 1040"><g fill="none" stroke="#1a1a1a" stroke-width="1"><path d="M513.0 167.4 C514.1 169.2 516.6 174.9 519.6 178.0 C522.6 181.1 526.7 184.3 531.0 186.0 C535.3 187.7 539.2 187.6 545.4 188.4 C551.6 189.2 562.4 189.0 568.0 190.8 C573.6 192.6 577.1 196.2 579.3 199.0 C581.5 201.8 581.0 204.6 581.0 207.3 C581.0 210.0 581.5 212.6 579.3 215.0 C577.1 217.4 573.6 220.2 568.0 222.0 C562.4 223.8 551.6 224.4 545.4 225.5 C539.2 226.6 535.3 226.5 531.0 228.5 C526.7 230.5 523.1 233.5 519.6 237.6 C516.1 241.7 513.5 249.3 510.0 253.0 C506.5 256.7 503.8 258.8 498.6 260.0 C493.4 261.2 483.9 261.0 479.0 260.2 C474.1 259.4 471.0 257.5 469.0 255.0 C467.0 252.5 467.4 246.7 467.1 245.0 L467.1 168" /><path d="M467 208.3 L581 207.3" /><path d="M525.3 200.2 L556.3 199.6 M525.3 215 L556.3 215" stroke="#777"/><path d="M584.5 206.6 C586.3 206.9 591.9 208.7 595.5 208.6 C599.1 208.5 602.7 208.0 606.2 206.2 C609.8 204.4 613.8 200.5 616.8 198.0 C619.8 195.5 622.2 192.4 624.0 191.0 C625.8 189.6 626.2 189.3 627.4 189.4 C628.6 189.5 630.1 189.8 631.1 191.4 C632.1 193.0 632.4 197.0 633.1 198.8 C633.8 200.6 634.7 201.6 635.5 202.3 C636.3 203.0 637.1 203.0 638.0 202.9 C638.9 202.8 639.8 202.3 641.0 201.6 C642.2 200.9 643.6 200.4 645.4 198.8 C647.2 197.2 650.1 193.0 651.9 192.3 C653.7 191.6 654.9 193.1 656.0 194.7 C657.1 196.3 657.4 200.2 658.5 202.1 C659.6 204.0 661.0 206.3 662.6 206.2 C664.2 206.1 666.6 202.9 668.3 201.3 C669.9 199.7 671.3 197.6 672.5 196.5 C673.7 195.4 674.4 194.6 675.6 194.7 C676.8 194.8 678.5 195.8 679.7 197.2 C680.9 198.6 681.5 202.1 682.6 203.3 C683.7 204.5 681.9 203.8 686.3 204.5 C690.7 205.2 702.5 206.5 708.8 207.3 C715.1 208.1 720.5 209.7 724.2 209.4 C727.9 209.1 729.2 207.5 731.0 205.4 C732.8 203.3 733.7 200.5 734.8 196.7 C735.9 192.9 737.2 185.1 737.7 182.8" /><path d="M584.5 206.6 C585.6 204.2 588.8 196.4 591.0 192.0 C593.2 187.6 594.8 184.0 598.0 180.0 C601.2 176.0 608.0 170.0 610.0 168.0" /><path d="M642.3 168 L680 175.1 L737.7 182.8" /><path d="M584.5 258.1 C585.5 255.3 587.3 247.5 590.6 241.3 C593.9 235.1 599.7 225.5 604.5 220.9 C609.3 216.3 615.1 214.9 619.2 213.5 C623.3 212.1 625.3 212.2 629.0 212.3 C632.7 212.4 634.5 213.1 641.3 214.3 C648.1 215.5 660.2 217.7 670.0 219.5 C679.8 221.3 686.4 223.0 700.0 225.0 C713.6 227.0 743.0 230.2 751.6 231.3" /><path d="M751.6 231.3 C751.2 233.9 750.2 242.4 749.2 246.7 C748.2 251.0 747.3 255.1 745.4 257.3 C743.5 259.6 739.0 259.7 737.7 260.2" /><path d="M737.7 260.2 C730.5 259.3 702.4 256.7 694.4 254.9 C686.4 253.1 691.0 251.3 689.6 249.6 C688.2 247.9 686.8 245.6 685.8 244.8 C684.8 244.0 684.9 244.6 683.8 245.0 C682.7 245.4 680.2 246.6 679.0 247.5 C677.8 248.4 678.0 248.8 676.5 250.3 C675.0 251.8 671.7 255.8 669.9 256.4 C668.1 256.9 667.0 255.6 665.8 253.6 C664.6 251.6 663.8 246.5 662.6 244.6 C661.4 242.7 659.9 242.1 658.5 242.1 C657.1 242.1 655.4 243.4 654.0 244.5 C652.6 245.6 652.0 247.2 650.3 248.7 C648.6 250.2 645.7 253.3 643.8 253.6 C641.9 253.9 640.3 252.4 638.9 250.3 C637.5 248.2 636.8 243.1 635.6 241.3 C634.4 239.5 632.8 239.4 631.5 239.3 C630.2 239.2 629.8 239.3 628.0 240.5 C626.2 241.7 624.3 243.6 620.9 246.2 C617.5 248.8 611.9 253.6 607.8 256.0 C603.7 258.4 600.2 260.1 596.3 260.5 C592.4 260.9 586.5 258.5 584.5 258.1" /><circle cx="694.9" cy="194.3" r="1.1" fill="#222"/><circle cx="717.5" cy="196.9" r="1.1" fill="#222"/><circle cx="705.2" cy="244" r="1.1" fill="#222"/><circle cx="729.8" cy="246.9" r="1.1" fill="#222"/><path d="M533.0 263.3 L557.3 270.5 L588.8 279.3 L660.7 341.3" /><path d="M660.7 341.3 C658.2 342.2 651.8 344.9 645.8 346.8 C639.8 348.8 631.5 351.2 625.0 353.0 C618.5 354.8 612.4 356.6 607.0 357.3 C601.6 358.0 600.6 358.1 592.7 357.3 C584.8 356.5 568.7 353.6 559.5 352.3 C550.3 351.0 545.1 350.0 537.4 349.5 C529.6 349.0 522.2 348.0 513.0 349.5 C503.8 351.0 488.7 357.4 482.0 358.4 C475.3 359.4 475.3 356.7 473.0 355.5 C470.7 354.3 469.0 352.2 468.0 351.0 C467.0 349.8 466.6 349.0 466.8 348.0 C467.0 347.0 466.8 346.1 469.0 345.0 C471.2 343.9 472.3 343.1 480.0 341.2 C487.7 339.3 504.1 334.7 515.3 333.5 C526.5 332.3 538.2 333.4 547.4 334.0 C556.6 334.6 564.2 336.8 570.6 337.4 C577.0 338.0 581.9 339.0 586.0 337.4 C590.1 335.8 593.9 331.4 595.0 328.0 C596.1 324.6 594.9 320.9 592.7 317.0 C590.5 313.1 583.5 306.8 581.6 304.8 L533 263.3" /><path d="M557.3 270.5 L645.8 346.8" /><path d="M527.5 333.7 C528.4 335.1 530.6 339.3 533.0 342.0 C535.4 344.7 540.3 348.8 541.8 350.1" /><path d="M547.4 334.0 C549.4 335.4 552.0 340.3 559.5 342.4 C567.0 344.5 585.1 344.4 592.7 346.8 C600.3 349.2 602.9 355.1 604.9 356.7" /><path d="M578.9 287 L600.4 305.9 M614.8 318.6 L634.2 334.6 M532.4 339.6 L539.6 345.7 M562.3 342.9 L591.6 347.3" stroke-width="2.4" stroke="#333"/><path d="M578.9 287 L600.4 305.9 M614.8 318.6 L634.2 334.6 M532.4 339.6 L539.6 345.7 M562.3 342.9 L591.6 347.3" stroke-width="0.9" stroke="#fff"/><path d="M538.8 362.1 L567.1 370.0 L597.2 378.0 L677.8 447.1" /><path d="M677.8 447.1 C675.3 448.1 669.1 451.3 662.8 453.3 C656.5 455.3 647.0 457.4 640.0 459.0 C633.0 460.6 626.3 462.3 621.1 463.0 C615.9 463.7 617.9 463.9 608.8 463.0 C599.7 462.1 576.3 459.0 566.3 457.7 C556.2 456.4 555.9 455.4 548.5 455.0 C541.1 454.6 532.9 453.4 522.0 455.0 C511.1 456.6 491.0 463.8 483.0 464.8 C475.0 465.8 476.3 462.5 474.0 461.0 C471.7 459.5 470.1 457.4 469.0 456.0 C467.9 454.6 467.2 453.7 467.3 452.6 C467.4 451.5 467.4 450.6 469.5 449.5 C471.6 448.4 469.8 448.0 480.0 446.0 C490.2 444.0 517.6 438.4 530.8 437.3 C544.0 436.2 548.6 438.2 559.2 439.1 C569.8 440.0 586.9 443.1 594.6 442.7 C602.3 442.3 603.3 439.0 605.2 436.5 C607.1 434.0 607.3 431.5 606.1 427.6 C604.9 423.8 603.2 419.6 598.0 413.4 C592.8 407.2 578.9 394.2 575.1 390.4 L538.8 362.1" /><path d="M567.1 370 L662.8 453.3" /><path d="M533.5 437.3 C534.6 438.9 537.5 444.1 540.0 447.0 C542.5 449.9 547.1 453.7 548.5 455.0" /><path d="M555.6 439.1 C558.9 440.4 566.5 445.0 575.1 447.1 C583.7 449.2 599.9 448.9 607.0 451.5 C614.1 454.1 615.8 461.1 617.6 463.0" /><path d="M589.3 387.8 L612.3 408.1 M629.1 422.3 L649.5 439.1 M538 443.5 L546.8 451.5 M571.6 447 L602.6 452.4" stroke-width="2.4" stroke="#333"/><path d="M589.3 387.8 L612.3 408.1 M629.1 422.3 L649.5 439.1 M538 443.5 L546.8 451.5 M571.6 447 L602.6 452.4" stroke-width="0.9" stroke="#fff"/><path d="M683.1 459.5 C681.3 455.5 681.7 451.6 681.4 440.0 C681.1 428.4 681.1 401.2 681.4 390.0 C681.7 378.8 681.2 376.8 683.0 373.0 C684.8 369.2 686.7 368.3 692.0 367.4 C697.3 366.5 710.0 366.8 715.0 367.4 C720.0 368.0 719.6 368.1 722.0 371.0 C724.4 373.9 726.8 381.0 729.2 385.1 C731.6 389.2 732.8 393.3 736.3 395.7 C739.8 398.1 743.9 398.4 750.4 399.3 C756.9 400.2 769.7 399.7 775.2 401.0 C780.7 402.3 781.7 404.5 783.5 407.0 C785.3 409.5 785.7 413.0 785.8 416.1 C785.9 419.2 785.8 423.3 784.0 425.8 C782.2 428.3 780.8 429.9 775.2 431.1 C769.6 432.3 756.9 432.0 750.4 432.9 C743.9 433.8 740.1 434.1 736.3 436.5 C732.5 438.9 729.8 443.0 727.4 447.1 C725.0 451.2 724.1 458.5 722.0 461.3 C719.9 464.1 720.0 463.5 715.0 463.9 C710.0 464.3 697.3 464.6 692.0 463.9 C686.7 463.2 684.9 463.5 683.1 459.5 Z" /><path d="M681.4 416.1 L785.8 416.1" /><path d="M735.4 408.1 L762.8 408.1 M735.4 422.8 L762.8 422.8" stroke="#888"/><g><path d="M629.6 573.5 C627.8 573.3 622.3 573.6 619.0 572.4 C615.7 571.1 613.1 567.6 609.9 566.0 C606.7 564.4 603.3 562.3 600.0 562.5 C596.7 562.7 593.3 565.0 590.0 567.0 C586.7 569.0 582.8 574.2 580.0 574.5 C577.2 574.8 574.5 572.6 573.0 569.0 C571.5 565.4 570.8 557.8 571.0 553.0 C571.2 548.2 573.5 542.2 574.0 540.0 L584.3 505.7" /><path d="M584.3 505.7 C583.7 503.8 581.7 496.6 580.5 494.0 C579.3 491.4 577.6 490.8 577.0 490.2 L558.7 528.5 L528.5 470" /><path d="M528.5 470.0 C526.8 472.1 521.7 477.9 518.5 482.8 C515.3 487.7 512.4 493.4 509.3 499.3 C506.2 505.2 503.1 511.4 500.2 518.5 C497.3 525.6 494.4 534.9 492.0 542.2 C489.6 549.5 487.0 557.1 485.6 562.3 C484.2 567.5 484.1 571.5 483.8 573.3 L472.8 580.6 L479.2 588 L470.3 640 L466.6 669 L509.7 819" /><path d="M509.7 819.0 C510.9 820.2 514.4 824.6 517.0 826.0 C519.6 827.4 522.9 828.0 525.6 827.5 C528.3 827.0 530.5 825.2 533.0 823.0 C535.5 820.8 535.6 821.6 540.6 814.4 C545.6 807.2 558.4 785.2 563.1 779.7 C567.8 774.2 567.8 781.3 568.8 781.6 L574.4 795.6 L625 760" /><path d="M625.0 760.0 C625.3 757.2 626.6 745.9 626.9 743.1 L597.7 620.8" /><path d="M547.5 537 Q554 546 558.7 547 Q565 545 571.5 527" stroke-width="0.7"/><path d="M477 600 L507.8 697.2" /><path d="M475 648.4 L524.7 821.9" /><path d="M520 746.9 L496.6 770.3" /><path d="M574.2 628.8 C573.6 630.7 570.4 632.1 570.7 640.3 C571.1 648.5 573.9 670.5 576.3 677.8 C578.7 685.1 583.3 682.2 585.2 684.3 C587.1 686.4 588.5 687.0 587.6 690.3 C586.8 693.6 580.8 700.4 580.1 704.1 C579.4 707.8 581.0 709.9 583.2 712.3 C585.4 714.7 592.8 714.7 593.2 718.3 C593.6 721.9 586.2 730.4 585.7 734.1 C585.2 737.8 588.0 738.8 590.2 740.3 C592.4 741.8 598.8 740.5 598.8 743.3 C598.8 746.1 592.7 753.2 590.2 757.3 C587.7 761.4 584.9 766.0 583.8 767.8" stroke-width="0.6"/><path d="M617.5 649.7 V597.5 Q617.5 594.5 614 593.8 M617.5 649.7 H629.6 M617.5 611.3 H629.6 M629.6 573.5 V649.7" /><path d="M600 603 Q601 595.5 609 595 L620 594.5" stroke-width="0.6"/><path d="M486.3 646.6 L495.6 674.7 M526.7 497.5 L538.6 519.4 M509.7 771.3 L520 805 M498 768 L506 761" stroke-width="2.4" stroke="#333"/><path d="M486.3 646.6 L495.6 674.7 M526.7 497.5 L538.6 519.4 M509.7 771.3 L520 805 M498 768 L506 761" stroke-width="0.9" stroke="#fff"/><path d="M620 592.5 H627 M623 611.3 H629" stroke-width="2.2" stroke="#333"/><path d="M597.7 621 L597.7 600.6 Q598 593.5 606 592.8 L629.6 591.5" /><path d="M518.5 482.8 L545.9 534 Q553 548 558.7 549.5 Q566 548 573.3 527.6 L584.3 505.7" /><path d="M537.7 560.1 C532.7 561.4 526.1 571.7 522.0 580.0 C517.9 588.3 515.1 598.3 513.0 610.0 C510.9 621.7 510.3 635.6 509.3 650.0 C508.3 664.4 506.4 683.8 506.9 696.3 C507.3 708.8 509.8 717.4 512.0 725.0 C514.2 732.6 517.3 738.4 520.0 742.2 C522.7 746.0 524.6 747.8 528.4 747.8 C532.1 747.8 538.1 746.0 542.5 742.2 C546.9 738.4 551.2 732.6 555.0 725.0 C558.8 717.4 563.0 708.9 565.0 696.3 C567.0 683.7 567.4 664.6 566.9 649.4 C566.4 634.2 564.5 617.9 562.0 605.0 C559.5 592.1 556.0 579.5 552.0 572.0 C548.0 564.5 542.7 558.8 537.7 560.1 Z" /><path d="M571.4 727.3 C572.8 726.8 573.8 729.3 574.3 731.4 C574.8 733.5 574.7 736.6 574.6 740.0 C574.5 743.4 574.3 747.4 573.9 751.8 C573.5 756.2 573.2 763.6 572.2 766.5 C571.2 769.4 569.5 769.1 568.1 769.4 C566.7 769.7 565.2 768.9 564.0 768.5 C562.8 768.1 562.1 767.8 560.8 767.3 C559.4 766.8 557.7 765.0 555.9 765.3 C554.1 765.6 552.4 766.5 550.2 769.0 C548.0 771.5 545.7 776.5 542.8 780.4 C539.9 784.3 535.6 790.9 533.0 792.3 C530.4 793.7 529.0 792.0 527.3 788.6 C525.6 785.2 523.3 776.2 522.8 772.2 C522.2 768.2 523.0 765.7 524.0 764.9 C525.0 764.1 526.7 765.8 528.9 767.3 C531.1 768.8 534.8 773.2 537.1 773.9 C539.4 774.6 539.9 774.7 542.8 771.4 C545.6 768.1 550.4 760.3 554.2 754.2 C558.0 748.1 562.8 739.1 565.7 734.6 C568.6 730.1 570.0 727.8 571.4 727.3 Z" /><path d="M597.7 621.4 C594.1 622.6 580.2 625.4 576.0 628.5 C571.8 631.6 572.1 631.8 572.5 640.0 C572.9 648.2 575.7 670.2 578.1 677.5 C580.5 684.8 585.1 681.9 587.0 684.0 C588.9 686.1 590.2 686.7 589.4 690.0 C588.5 693.3 582.6 700.1 581.9 703.8 C581.2 707.5 582.8 709.6 585.0 712.0 C587.2 714.4 594.6 714.4 595.0 718.0 C595.4 721.6 588.0 730.1 587.5 733.8 C587.0 737.5 589.8 738.5 592.0 740.0 C594.2 741.5 600.6 740.2 600.6 743.0 C600.6 745.8 594.5 752.9 592.0 757.0 C589.5 761.1 587.1 762.0 585.6 767.5 C584.1 773.0 583.3 786.2 582.8 790.0" /><circle cx="601.5" cy="584.1" r="1.2" fill="none" stroke="#222" stroke-width="0.8"/><circle cx="619.6" cy="584.1" r="1.2" fill="none" stroke="#222" stroke-width="0.8"/><circle cx="583.1" cy="619.4" r="1.2" fill="none" stroke="#222" stroke-width="0.8"/><circle cx="585.3" cy="644" r="1.2" fill="none" stroke="#222" stroke-width="0.8"/><circle cx="590" cy="668.7" r="1.2" fill="none" stroke="#222" stroke-width="0.8"/><circle cx="587" cy="690" r="1.2" fill="none" stroke="#222" stroke-width="0.8"/><circle cx="590.3" cy="716" r="1.2" fill="none" stroke="#222" stroke-width="0.8"/><circle cx="593.7" cy="743" r="1.2" fill="none" stroke="#222" stroke-width="0.8"/></g><g transform="translate(1259.2,0) scale(-1,1)"><path d="M629.6 573.5 C627.8 573.3 622.3 573.6 619.0 572.4 C615.7 571.1 613.1 567.6 609.9 566.0 C606.7 564.4 603.3 562.3 600.0 562.5 C596.7 562.7 593.3 565.0 590.0 567.0 C586.7 569.0 582.8 574.2 580.0 574.5 C577.2 574.8 574.5 572.6 573.0 569.0 C571.5 565.4 570.8 557.8 571.0 553.0 C571.2 548.2 573.5 542.2 574.0 540.0 L584.3 505.7" /><path d="M584.3 505.7 C583.7 503.8 581.7 496.6 580.5 494.0 C579.3 491.4 577.6 490.8 577.0 490.2 L558.7 528.5 L528.5 470" /><path d="M528.5 470.0 C526.8 472.1 521.7 477.9 518.5 482.8 C515.3 487.7 512.4 493.4 509.3 499.3 C506.2 505.2 503.1 511.4 500.2 518.5 C497.3 525.6 494.4 534.9 492.0 542.2 C489.6 549.5 487.0 557.1 485.6 562.3 C484.2 567.5 484.1 571.5 483.8 573.3 L472.8 580.6 L479.2 588 L470.3 640 L466.6 669 L509.7 819" /><path d="M509.7 819.0 C510.9 820.2 514.4 824.6 517.0 826.0 C519.6 827.4 522.9 828.0 525.6 827.5 C528.3 827.0 530.5 825.2 533.0 823.0 C535.5 820.8 535.6 821.6 540.6 814.4 C545.6 807.2 558.4 785.2 563.1 779.7 C567.8 774.2 567.8 781.3 568.8 781.6 L574.4 795.6 L625 760" /><path d="M625.0 760.0 C625.3 757.2 626.6 745.9 626.9 743.1 L597.7 620.8" /><path d="M547.5 537 Q554 546 558.7 547 Q565 545 571.5 527" stroke-width="0.7"/><path d="M477 600 L507.8 697.2" /><path d="M475 648.4 L524.7 821.9" /><path d="M520 746.9 L496.6 770.3" /><path d="M574.2 628.8 C573.6 630.7 570.4 632.1 570.7 640.3 C571.1 648.5 573.9 670.5 576.3 677.8 C578.7 685.1 583.3 682.2 585.2 684.3 C587.1 686.4 588.5 687.0 587.6 690.3 C586.8 693.6 580.8 700.4 580.1 704.1 C579.4 707.8 581.0 709.9 583.2 712.3 C585.4 714.7 592.8 714.7 593.2 718.3 C593.6 721.9 586.2 730.4 585.7 734.1 C585.2 737.8 588.0 738.8 590.2 740.3 C592.4 741.8 598.8 740.5 598.8 743.3 C598.8 746.1 592.7 753.2 590.2 757.3 C587.7 761.4 584.9 766.0 583.8 767.8" stroke-width="0.6"/><path d="M617.5 649.7 V597.5 Q617.5 594.5 614 593.8 M617.5 649.7 H629.6 M617.5 611.3 H629.6 M629.6 573.5 V649.7" /><path d="M600 603 Q601 595.5 609 595 L620 594.5" stroke-width="0.6"/><path d="M486.3 646.6 L495.6 674.7 M526.7 497.5 L538.6 519.4 M509.7 771.3 L520 805 M498 768 L506 761" stroke-width="2.4" stroke="#333"/><path d="M486.3 646.6 L495.6 674.7 M526.7 497.5 L538.6 519.4 M509.7 771.3 L520 805 M498 768 L506 761" stroke-width="0.9" stroke="#fff"/><path d="M620 592.5 H627 M623 611.3 H629" stroke-width="2.2" stroke="#333"/><path d="M597.7 621 L597.7 600.6 Q598 593.5 606 592.8 L629.6 591.5" /><path d="M518.5 482.8 L545.9 534 Q553 548 558.7 549.5 Q566 548 573.3 527.6 L584.3 505.7" /><path d="M537.7 560.1 C532.7 561.4 526.1 571.7 522.0 580.0 C517.9 588.3 515.1 598.3 513.0 610.0 C510.9 621.7 510.3 635.6 509.3 650.0 C508.3 664.4 506.4 683.8 506.9 696.3 C507.3 708.8 509.8 717.4 512.0 725.0 C514.2 732.6 517.3 738.4 520.0 742.2 C522.7 746.0 524.6 747.8 528.4 747.8 C532.1 747.8 538.1 746.0 542.5 742.2 C546.9 738.4 551.2 732.6 555.0 725.0 C558.8 717.4 563.0 708.9 565.0 696.3 C567.0 683.7 567.4 664.6 566.9 649.4 C566.4 634.2 564.5 617.9 562.0 605.0 C559.5 592.1 556.0 579.5 552.0 572.0 C548.0 564.5 542.7 558.8 537.7 560.1 Z" /><path d="M571.4 727.3 C572.8 726.8 573.8 729.3 574.3 731.4 C574.8 733.5 574.7 736.6 574.6 740.0 C574.5 743.4 574.3 747.4 573.9 751.8 C573.5 756.2 573.2 763.6 572.2 766.5 C571.2 769.4 569.5 769.1 568.1 769.4 C566.7 769.7 565.2 768.9 564.0 768.5 C562.8 768.1 562.1 767.8 560.8 767.3 C559.4 766.8 557.7 765.0 555.9 765.3 C554.1 765.6 552.4 766.5 550.2 769.0 C548.0 771.5 545.7 776.5 542.8 780.4 C539.9 784.3 535.6 790.9 533.0 792.3 C530.4 793.7 529.0 792.0 527.3 788.6 C525.6 785.2 523.3 776.2 522.8 772.2 C522.2 768.2 523.0 765.7 524.0 764.9 C525.0 764.1 526.7 765.8 528.9 767.3 C531.1 768.8 534.8 773.2 537.1 773.9 C539.4 774.6 539.9 774.7 542.8 771.4 C545.6 768.1 550.4 760.3 554.2 754.2 C558.0 748.1 562.8 739.1 565.7 734.6 C568.6 730.1 570.0 727.8 571.4 727.3 Z" /><path d="M597.7 621.4 C594.1 622.6 580.2 625.4 576.0 628.5 C571.8 631.6 572.1 631.8 572.5 640.0 C572.9 648.2 575.7 670.2 578.1 677.5 C580.5 684.8 585.1 681.9 587.0 684.0 C588.9 686.1 590.2 686.7 589.4 690.0 C588.5 693.3 582.6 700.1 581.9 703.8 C581.2 707.5 582.8 709.6 585.0 712.0 C587.2 714.4 594.6 714.4 595.0 718.0 C595.4 721.6 588.0 730.1 587.5 733.8 C587.0 737.5 589.8 738.5 592.0 740.0 C594.2 741.5 600.6 740.2 600.6 743.0 C600.6 745.8 594.5 752.9 592.0 757.0 C589.5 761.1 587.1 762.0 585.6 767.5 C584.1 773.0 583.3 786.2 582.8 790.0" /><circle cx="601.5" cy="584.1" r="1.2" fill="none" stroke="#222" stroke-width="0.8"/><circle cx="619.6" cy="584.1" r="1.2" fill="none" stroke="#222" stroke-width="0.8"/><circle cx="583.1" cy="619.4" r="1.2" fill="none" stroke="#222" stroke-width="0.8"/><circle cx="585.3" cy="644" r="1.2" fill="none" stroke="#222" stroke-width="0.8"/><circle cx="590" cy="668.7" r="1.2" fill="none" stroke="#222" stroke-width="0.8"/><circle cx="587" cy="690" r="1.2" fill="none" stroke="#222" stroke-width="0.8"/><circle cx="590.3" cy="716" r="1.2" fill="none" stroke="#222" stroke-width="0.8"/><circle cx="593.7" cy="743" r="1.2" fill="none" stroke="#222" stroke-width="0.8"/></g></g><g font-family="Liberation Sans" font-size="8" fill="#222"><text x="502" y="223" transform="rotate(-12 510 220)">鞋42</text><text x="658" y="187" transform="rotate(-12 666 184)">鞋38</text><text x="666" y="236" transform="rotate(-12 674 233)">鞋42</text><text x="600" y="341" transform="rotate(200 607 338)">鞋38</text><text x="614" y="444" transform="rotate(195 621 441)">鞋42</text><text x="713" y="430" transform="rotate(-10 721 427)">鞋38</text><text x="731" y="554" transform="rotate(80 739 551)">鞋42</text></g><g transform="translate(947.5,498) scale(0.918) translate(-629.6,-470)" fill="none" stroke="#c9cbd3" stroke-width="8"><path d="M597.7 621 L597.7 600.6 Q598 593.5 606 592.8 L629.6 591.5" /><path d="M518.5 482.8 L545.9 534 Q553 548 558.7 549.5 Q566 548 573.3 527.6 L584.3 505.7" /><path d="M537.7 560.1 C532.7 561.4 526.1 571.7 522.0 580.0 C517.9 588.3 515.1 598.3 513.0 610.0 C510.9 621.7 510.3 635.6 509.3 650.0 C508.3 664.4 506.4 683.8 506.9 696.3 C507.3 708.8 509.8 717.4 512.0 725.0 C514.2 732.6 517.3 738.4 520.0 742.2 C522.7 746.0 524.6 747.8 528.4 747.8 C532.1 747.8 538.1 746.0 542.5 742.2 C546.9 738.4 551.2 732.6 555.0 725.0 C558.8 717.4 563.0 708.9 565.0 696.3 C567.0 683.7 567.4 664.6 566.9 649.4 C566.4 634.2 564.5 617.9 562.0 605.0 C559.5 592.1 556.0 579.5 552.0 572.0 C548.0 564.5 542.7 558.8 537.7 560.1 Z" /><path d="M571.4 727.3 C572.8 726.8 573.8 729.3 574.3 731.4 C574.8 733.5 574.7 736.6 574.6 740.0 C574.5 743.4 574.3 747.4 573.9 751.8 C573.5 756.2 573.2 763.6 572.2 766.5 C571.2 769.4 569.5 769.1 568.1 769.4 C566.7 769.7 565.2 768.9 564.0 768.5 C562.8 768.1 562.1 767.8 560.8 767.3 C559.4 766.8 557.7 765.0 555.9 765.3 C554.1 765.6 552.4 766.5 550.2 769.0 C548.0 771.5 545.7 776.5 542.8 780.4 C539.9 784.3 535.6 790.9 533.0 792.3 C530.4 793.7 529.0 792.0 527.3 788.6 C525.6 785.2 523.3 776.2 522.8 772.2 C522.2 768.2 523.0 765.7 524.0 764.9 C525.0 764.1 526.7 765.8 528.9 767.3 C531.1 768.8 534.8 773.2 537.1 773.9 C539.4 774.6 539.9 774.7 542.8 771.4 C545.6 768.1 550.4 760.3 554.2 754.2 C558.0 748.1 562.8 739.1 565.7 734.6 C568.6 730.1 570.0 727.8 571.4 727.3 Z" /><path d="M597.7 621.4 C594.1 622.6 580.2 625.4 576.0 628.5 C571.8 631.6 572.1 631.8 572.5 640.0 C572.9 648.2 575.7 670.2 578.1 677.5 C580.5 684.8 585.1 681.9 587.0 684.0 C588.9 686.1 590.2 686.7 589.4 690.0 C588.5 693.3 582.6 700.1 581.9 703.8 C581.2 707.5 582.8 709.6 585.0 712.0 C587.2 714.4 594.6 714.4 595.0 718.0 C595.4 721.6 588.0 730.1 587.5 733.8 C587.0 737.5 589.8 738.5 592.0 740.0 C594.2 741.5 600.6 740.2 600.6 743.0 C600.6 745.8 594.5 752.9 592.0 757.0 C589.5 761.1 587.1 762.0 585.6 767.5 C584.1 773.0 583.3 786.2 582.8 790.0" /></g><g transform="translate(947.5,498) scale(0.918) translate(-629.6,-470) translate(1259.2,0) scale(-1,1)" fill="none" stroke="#c9cbd3" stroke-width="8"><path d="M597.7 621 L597.7 600.6 Q598 593.5 606 592.8 L629.6 591.5" /><path d="M518.5 482.8 L545.9 534 Q553 548 558.7 549.5 Q566 548 573.3 527.6 L584.3 505.7" /><path d="M537.7 560.1 C532.7 561.4 526.1 571.7 522.0 580.0 C517.9 588.3 515.1 598.3 513.0 610.0 C510.9 621.7 510.3 635.6 509.3 650.0 C508.3 664.4 506.4 683.8 506.9 696.3 C507.3 708.8 509.8 717.4 512.0 725.0 C514.2 732.6 517.3 738.4 520.0 742.2 C522.7 746.0 524.6 747.8 528.4 747.8 C532.1 747.8 538.1 746.0 542.5 742.2 C546.9 738.4 551.2 732.6 555.0 725.0 C558.8 717.4 563.0 708.9 565.0 696.3 C567.0 683.7 567.4 664.6 566.9 649.4 C566.4 634.2 564.5 617.9 562.0 605.0 C559.5 592.1 556.0 579.5 552.0 572.0 C548.0 564.5 542.7 558.8 537.7 560.1 Z" /><path d="M571.4 727.3 C572.8 726.8 573.8 729.3 574.3 731.4 C574.8 733.5 574.7 736.6 574.6 740.0 C574.5 743.4 574.3 747.4 573.9 751.8 C573.5 756.2 573.2 763.6 572.2 766.5 C571.2 769.4 569.5 769.1 568.1 769.4 C566.7 769.7 565.2 768.9 564.0 768.5 C562.8 768.1 562.1 767.8 560.8 767.3 C559.4 766.8 557.7 765.0 555.9 765.3 C554.1 765.6 552.4 766.5 550.2 769.0 C548.0 771.5 545.7 776.5 542.8 780.4 C539.9 784.3 535.6 790.9 533.0 792.3 C530.4 793.7 529.0 792.0 527.3 788.6 C525.6 785.2 523.3 776.2 522.8 772.2 C522.2 768.2 523.0 765.7 524.0 764.9 C525.0 764.1 526.7 765.8 528.9 767.3 C531.1 768.8 534.8 773.2 537.1 773.9 C539.4 774.6 539.9 774.7 542.8 771.4 C545.6 768.1 550.4 760.3 554.2 754.2 C558.0 748.1 562.8 739.1 565.7 734.6 C568.6 730.1 570.0 727.8 571.4 727.3 Z" /><path d="M597.7 621.4 C594.1 622.6 580.2 625.4 576.0 628.5 C571.8 631.6 572.1 631.8 572.5 640.0 C572.9 648.2 575.7 670.2 578.1 677.5 C580.5 684.8 585.1 681.9 587.0 684.0 C588.9 686.1 590.2 686.7 589.4 690.0 C588.5 693.3 582.6 700.1 581.9 703.8 C581.2 707.5 582.8 709.6 585.0 712.0 C587.2 714.4 594.6 714.4 595.0 718.0 C595.4 721.6 588.0 730.1 587.5 733.8 C587.0 737.5 589.8 738.5 592.0 740.0 C594.2 741.5 600.6 740.2 600.6 743.0 C600.6 745.8 594.5 752.9 592.0 757.0 C589.5 761.1 587.1 762.0 585.6 767.5 C584.1 773.0 583.3 786.2 582.8 790.0" /></g><rect x="796" y="497.5" width="303" height="329" fill="none" stroke="#777" stroke-width="1"/><g transform="translate(947.5,498) scale(0.918) translate(-629.6,-470)" fill="none" stroke="#1a1a1a" stroke-width="1"><g><path d="M629.6 573.5 C627.8 573.3 622.3 573.6 619.0 572.4 C615.7 571.1 613.1 567.6 609.9 566.0 C606.7 564.4 603.3 562.3 600.0 562.5 C596.7 562.7 593.3 565.0 590.0 567.0 C586.7 569.0 582.8 574.2 580.0 574.5 C577.2 574.8 574.5 572.6 573.0 569.0 C571.5 565.4 570.8 557.8 571.0 553.0 C571.2 548.2 573.5 542.2 574.0 540.0 L584.3 505.7" /><path d="M584.3 505.7 C583.7 503.8 581.7 496.6 580.5 494.0 C579.3 491.4 577.6 490.8 577.0 490.2 L558.7 528.5 L528.5 470" /><path d="M528.5 470.0 C526.8 472.1 521.7 477.9 518.5 482.8 C515.3 487.7 512.4 493.4 509.3 499.3 C506.2 505.2 503.1 511.4 500.2 518.5 C497.3 525.6 494.4 534.9 492.0 542.2 C489.6 549.5 487.0 557.1 485.6 562.3 C484.2 567.5 484.1 571.5 483.8 573.3 L472.8 580.6 L479.2 588 L470.3 640 L466.6 669 L509.7 819" /><path d="M509.7 819.0 C510.9 820.2 514.4 824.6 517.0 826.0 C519.6 827.4 522.9 828.0 525.6 827.5 C528.3 827.0 530.5 825.2 533.0 823.0 C535.5 820.8 535.6 821.6 540.6 814.4 C545.6 807.2 558.4 785.2 563.1 779.7 C567.8 774.2 567.8 781.3 568.8 781.6 L574.4 795.6 L625 760" /><path d="M625.0 760.0 C625.3 757.2 626.6 745.9 626.9 743.1 L597.7 620.8" /><path d="M547.5 537 Q554 546 558.7 547 Q565 545 571.5 527" stroke-width="0.7"/><path d="M477 600 L507.8 697.2" /><path d="M475 648.4 L524.7 821.9" /><path d="M520 746.9 L496.6 770.3" /><path d="M574.2 628.8 C573.6 630.7 570.4 632.1 570.7 640.3 C571.1 648.5 573.9 670.5 576.3 677.8 C578.7 685.1 583.3 682.2 585.2 684.3 C587.1 686.4 588.5 687.0 587.6 690.3 C586.8 693.6 580.8 700.4 580.1 704.1 C579.4 707.8 581.0 709.9 583.2 712.3 C585.4 714.7 592.8 714.7 593.2 718.3 C593.6 721.9 586.2 730.4 585.7 734.1 C585.2 737.8 588.0 738.8 590.2 740.3 C592.4 741.8 598.8 740.5 598.8 743.3 C598.8 746.1 592.7 753.2 590.2 757.3 C587.7 761.4 584.9 766.0 583.8 767.8" stroke-width="0.6"/><path d="M617.5 649.7 V597.5 Q617.5 594.5 614 593.8 M617.5 649.7 H629.6 M617.5 611.3 H629.6 M629.6 573.5 V649.7" /><path d="M600 603 Q601 595.5 609 595 L620 594.5" stroke-width="0.6"/><path d="M486.3 646.6 L495.6 674.7 M526.7 497.5 L538.6 519.4 M509.7 771.3 L520 805 M498 768 L506 761" stroke-width="2.4" stroke="#333"/><path d="M486.3 646.6 L495.6 674.7 M526.7 497.5 L538.6 519.4 M509.7 771.3 L520 805 M498 768 L506 761" stroke-width="0.9" stroke="#fff"/><path d="M620 592.5 H627 M623 611.3 H629" stroke-width="2.2" stroke="#333"/><path d="M597.7 621 L597.7 600.6 Q598 593.5 606 592.8 L629.6 591.5" /><path d="M518.5 482.8 L545.9 534 Q553 548 558.7 549.5 Q566 548 573.3 527.6 L584.3 505.7" /><path d="M537.7 560.1 C532.7 561.4 526.1 571.7 522.0 580.0 C517.9 588.3 515.1 598.3 513.0 610.0 C510.9 621.7 510.3 635.6 509.3 650.0 C508.3 664.4 506.4 683.8 506.9 696.3 C507.3 708.8 509.8 717.4 512.0 725.0 C514.2 732.6 517.3 738.4 520.0 742.2 C522.7 746.0 524.6 747.8 528.4 747.8 C532.1 747.8 538.1 746.0 542.5 742.2 C546.9 738.4 551.2 732.6 555.0 725.0 C558.8 717.4 563.0 708.9 565.0 696.3 C567.0 683.7 567.4 664.6 566.9 649.4 C566.4 634.2 564.5 617.9 562.0 605.0 C559.5 592.1 556.0 579.5 552.0 572.0 C548.0 564.5 542.7 558.8 537.7 560.1 Z" /><path d="M571.4 727.3 C572.8 726.8 573.8 729.3 574.3 731.4 C574.8 733.5 574.7 736.6 574.6 740.0 C574.5 743.4 574.3 747.4 573.9 751.8 C573.5 756.2 573.2 763.6 572.2 766.5 C571.2 769.4 569.5 769.1 568.1 769.4 C566.7 769.7 565.2 768.9 564.0 768.5 C562.8 768.1 562.1 767.8 560.8 767.3 C559.4 766.8 557.7 765.0 555.9 765.3 C554.1 765.6 552.4 766.5 550.2 769.0 C548.0 771.5 545.7 776.5 542.8 780.4 C539.9 784.3 535.6 790.9 533.0 792.3 C530.4 793.7 529.0 792.0 527.3 788.6 C525.6 785.2 523.3 776.2 522.8 772.2 C522.2 768.2 523.0 765.7 524.0 764.9 C525.0 764.1 526.7 765.8 528.9 767.3 C531.1 768.8 534.8 773.2 537.1 773.9 C539.4 774.6 539.9 774.7 542.8 771.4 C545.6 768.1 550.4 760.3 554.2 754.2 C558.0 748.1 562.8 739.1 565.7 734.6 C568.6 730.1 570.0 727.8 571.4 727.3 Z" /><path d="M597.7 621.4 C594.1 622.6 580.2 625.4 576.0 628.5 C571.8 631.6 572.1 631.8 572.5 640.0 C572.9 648.2 575.7 670.2 578.1 677.5 C580.5 684.8 585.1 681.9 587.0 684.0 C588.9 686.1 590.2 686.7 589.4 690.0 C588.5 693.3 582.6 700.1 581.9 703.8 C581.2 707.5 582.8 709.6 585.0 712.0 C587.2 714.4 594.6 714.4 595.0 718.0 C595.4 721.6 588.0 730.1 587.5 733.8 C587.0 737.5 589.8 738.5 592.0 740.0 C594.2 741.5 600.6 740.2 600.6 743.0 C600.6 745.8 594.5 752.9 592.0 757.0 C589.5 761.1 587.1 762.0 585.6 767.5 C584.1 773.0 583.3 786.2 582.8 790.0" /><circle cx="601.5" cy="584.1" r="1.2" fill="none" stroke="#222" stroke-width="0.8"/><circle cx="619.6" cy="584.1" r="1.2" fill="none" stroke="#222" stroke-width="0.8"/><circle cx="583.1" cy="619.4" r="1.2" fill="none" stroke="#222" stroke-width="0.8"/><circle cx="585.3" cy="644" r="1.2" fill="none" stroke="#222" stroke-width="0.8"/><circle cx="590" cy="668.7" r="1.2" fill="none" stroke="#222" stroke-width="0.8"/><circle cx="587" cy="690" r="1.2" fill="none" stroke="#222" stroke-width="0.8"/><circle cx="590.3" cy="716" r="1.2" fill="none" stroke="#222" stroke-width="0.8"/><circle cx="593.7" cy="743" r="1.2" fill="none" stroke="#222" stroke-width="0.8"/></g><g transform="translate(1259.2,0) scale(-1,1)"><path d="M629.6 573.5 C627.8 573.3 622.3 573.6 619.0 572.4 C615.7 571.1 613.1 567.6 609.9 566.0 C606.7 564.4 603.3 562.3 600.0 562.5 C596.7 562.7 593.3 565.0 590.0 567.0 C586.7 569.0 582.8 574.2 580.0 574.5 C577.2 574.8 574.5 572.6 573.0 569.0 C571.5 565.4 570.8 557.8 571.0 553.0 C571.2 548.2 573.5 542.2 574.0 540.0 L584.3 505.7" /><path d="M584.3 505.7 C583.7 503.8 581.7 496.6 580.5 494.0 C579.3 491.4 577.6 490.8 577.0 490.2 L558.7 528.5 L528.5 470" /><path d="M528.5 470.0 C526.8 472.1 521.7 477.9 518.5 482.8 C515.3 487.7 512.4 493.4 509.3 499.3 C506.2 505.2 503.1 511.4 500.2 518.5 C497.3 525.6 494.4 534.9 492.0 542.2 C489.6 549.5 487.0 557.1 485.6 562.3 C484.2 567.5 484.1 571.5 483.8 573.3 L472.8 580.6 L479.2 588 L470.3 640 L466.6 669 L509.7 819" /><path d="M509.7 819.0 C510.9 820.2 514.4 824.6 517.0 826.0 C519.6 827.4 522.9 828.0 525.6 827.5 C528.3 827.0 530.5 825.2 533.0 823.0 C535.5 820.8 535.6 821.6 540.6 814.4 C545.6 807.2 558.4 785.2 563.1 779.7 C567.8 774.2 567.8 781.3 568.8 781.6 L574.4 795.6 L625 760" /><path d="M625.0 760.0 C625.3 757.2 626.6 745.9 626.9 743.1 L597.7 620.8" /><path d="M547.5 537 Q554 546 558.7 547 Q565 545 571.5 527" stroke-width="0.7"/><path d="M477 600 L507.8 697.2" /><path d="M475 648.4 L524.7 821.9" /><path d="M520 746.9 L496.6 770.3" /><path d="M574.2 628.8 C573.6 630.7 570.4 632.1 570.7 640.3 C571.1 648.5 573.9 670.5 576.3 677.8 C578.7 685.1 583.3 682.2 585.2 684.3 C587.1 686.4 588.5 687.0 587.6 690.3 C586.8 693.6 580.8 700.4 580.1 704.1 C579.4 707.8 581.0 709.9 583.2 712.3 C585.4 714.7 592.8 714.7 593.2 718.3 C593.6 721.9 586.2 730.4 585.7 734.1 C585.2 737.8 588.0 738.8 590.2 740.3 C592.4 741.8 598.8 740.5 598.8 743.3 C598.8 746.1 592.7 753.2 590.2 757.3 C587.7 761.4 584.9 766.0 583.8 767.8" stroke-width="0.6"/><path d="M617.5 649.7 V597.5 Q617.5 594.5 614 593.8 M617.5 649.7 H629.6 M617.5 611.3 H629.6 M629.6 573.5 V649.7" /><path d="M600 603 Q601 595.5 609 595 L620 594.5" stroke-width="0.6"/><path d="M486.3 646.6 L495.6 674.7 M526.7 497.5 L538.6 519.4 M509.7 771.3 L520 805 M498 768 L506 761" stroke-width="2.4" stroke="#333"/><path d="M486.3 646.6 L495.6 674.7 M526.7 497.5 L538.6 519.4 M509.7 771.3 L520 805 M498 768 L506 761" stroke-width="0.9" stroke="#fff"/><path d="M620 592.5 H627 M623 611.3 H629" stroke-width="2.2" stroke="#333"/><path d="M597.7 621 L597.7 600.6 Q598 593.5 606 592.8 L629.6 591.5" /><path d="M518.5 482.8 L545.9 534 Q553 548 558.7 549.5 Q566 548 573.3 527.6 L584.3 505.7" /><path d="M537.7 560.1 C532.7 561.4 526.1 571.7 522.0 580.0 C517.9 588.3 515.1 598.3 513.0 610.0 C510.9 621.7 510.3 635.6 509.3 650.0 C508.3 664.4 506.4 683.8 506.9 696.3 C507.3 708.8 509.8 717.4 512.0 725.0 C514.2 732.6 517.3 738.4 520.0 742.2 C522.7 746.0 524.6 747.8 528.4 747.8 C532.1 747.8 538.1 746.0 542.5 742.2 C546.9 738.4 551.2 732.6 555.0 725.0 C558.8 717.4 563.0 708.9 565.0 696.3 C567.0 683.7 567.4 664.6 566.9 649.4 C566.4 634.2 564.5 617.9 562.0 605.0 C559.5 592.1 556.0 579.5 552.0 572.0 C548.0 564.5 542.7 558.8 537.7 560.1 Z" /><path d="M571.4 727.3 C572.8 726.8 573.8 729.3 574.3 731.4 C574.8 733.5 574.7 736.6 574.6 740.0 C574.5 743.4 574.3 747.4 573.9 751.8 C573.5 756.2 573.2 763.6 572.2 766.5 C571.2 769.4 569.5 769.1 568.1 769.4 C566.7 769.7 565.2 768.9 564.0 768.5 C562.8 768.1 562.1 767.8 560.8 767.3 C559.4 766.8 557.7 765.0 555.9 765.3 C554.1 765.6 552.4 766.5 550.2 769.0 C548.0 771.5 545.7 776.5 542.8 780.4 C539.9 784.3 535.6 790.9 533.0 792.3 C530.4 793.7 529.0 792.0 527.3 788.6 C525.6 785.2 523.3 776.2 522.8 772.2 C522.2 768.2 523.0 765.7 524.0 764.9 C525.0 764.1 526.7 765.8 528.9 767.3 C531.1 768.8 534.8 773.2 537.1 773.9 C539.4 774.6 539.9 774.7 542.8 771.4 C545.6 768.1 550.4 760.3 554.2 754.2 C558.0 748.1 562.8 739.1 565.7 734.6 C568.6 730.1 570.0 727.8 571.4 727.3 Z" /><path d="M597.7 621.4 C594.1 622.6 580.2 625.4 576.0 628.5 C571.8 631.6 572.1 631.8 572.5 640.0 C572.9 648.2 575.7 670.2 578.1 677.5 C580.5 684.8 585.1 681.9 587.0 684.0 C588.9 686.1 590.2 686.7 589.4 690.0 C588.5 693.3 582.6 700.1 581.9 703.8 C581.2 707.5 582.8 709.6 585.0 712.0 C587.2 714.4 594.6 714.4 595.0 718.0 C595.4 721.6 588.0 730.1 587.5 733.8 C587.0 737.5 589.8 738.5 592.0 740.0 C594.2 741.5 600.6 740.2 600.6 743.0 C600.6 745.8 594.5 752.9 592.0 757.0 C589.5 761.1 587.1 762.0 585.6 767.5 C584.1 773.0 583.3 786.2 582.8 790.0" /><circle cx="601.5" cy="584.1" r="1.2" fill="none" stroke="#222" stroke-width="0.8"/><circle cx="619.6" cy="584.1" r="1.2" fill="none" stroke="#222" stroke-width="0.8"/><circle cx="583.1" cy="619.4" r="1.2" fill="none" stroke="#222" stroke-width="0.8"/><circle cx="585.3" cy="644" r="1.2" fill="none" stroke="#222" stroke-width="0.8"/><circle cx="590" cy="668.7" r="1.2" fill="none" stroke="#222" stroke-width="0.8"/><circle cx="587" cy="690" r="1.2" fill="none" stroke="#222" stroke-width="0.8"/><circle cx="590.3" cy="716" r="1.2" fill="none" stroke="#222" stroke-width="0.8"/><circle cx="593.7" cy="743" r="1.2" fill="none" stroke="#222" stroke-width="0.8"/></g></g><g transform="translate(947.5,498) scale(0.918) translate(-629.6,-470)" fill="none" stroke="#3047d2" stroke-width="3.6" stroke-dasharray="0 13" stroke-linecap="square"><path d="M584.3 505.7 C583.7 503.8 581.7 496.6 580.5 494.0 C579.3 491.4 577.6 490.8 577.0 490.2 L558.7 528.5 L528.5 470" /><path d="M528.5 470.0 C526.8 472.1 521.7 477.9 518.5 482.8 C515.3 487.7 512.4 493.4 509.3 499.3 C506.2 505.2 503.1 511.4 500.2 518.5 C497.3 525.6 494.4 534.9 492.0 542.2 C489.6 549.5 487.0 557.1 485.6 562.3 C484.2 567.5 484.1 571.5 483.8 573.3 L472.8 580.6 L479.2 588 L470.3 640 L466.6 669 L509.7 819" /><path d="M509.7 819.0 C510.9 820.2 514.4 824.6 517.0 826.0 C519.6 827.4 522.9 828.0 525.6 827.5 C528.3 827.0 530.5 825.2 533.0 823.0 C535.5 820.8 535.6 821.6 540.6 814.4 C545.6 807.2 558.4 785.2 563.1 779.7 C567.8 774.2 567.8 781.3 568.8 781.6 L574.4 795.6 L625 760" /><path d="M625.0 760.0 C625.3 757.2 626.6 745.9 626.9 743.1 L597.7 620.8" /><path d="M547.5 537 Q554 546 558.7 547 Q565 545 571.5 527" stroke-width="0.7"/><path d="M477 600 L507.8 697.2" /><path d="M475 648.4 L524.7 821.9" /><path d="M520 746.9 L496.6 770.3" /><path d="M574.2 628.8 C573.6 630.7 570.4 632.1 570.7 640.3 C571.1 648.5 573.9 670.5 576.3 677.8 C578.7 685.1 583.3 682.2 585.2 684.3 C587.1 686.4 588.5 687.0 587.6 690.3 C586.8 693.6 580.8 700.4 580.1 704.1 C579.4 707.8 581.0 709.9 583.2 712.3 C585.4 714.7 592.8 714.7 593.2 718.3 C593.6 721.9 586.2 730.4 585.7 734.1 C585.2 737.8 588.0 738.8 590.2 740.3 C592.4 741.8 598.8 740.5 598.8 743.3 C598.8 746.1 592.7 753.2 590.2 757.3 C587.7 761.4 584.9 766.0 583.8 767.8" stroke-width="0.6"/><path d="M617.5 649.7 V597.5 Q617.5 594.5 614 593.8 M617.5 649.7 H629.6 M617.5 611.3 H629.6 M629.6 573.5 V649.7" /><path d="M600 603 Q601 595.5 609 595 L620 594.5" stroke-width="0.6"/><path d="M486.3 646.6 L495.6 674.7 M526.7 497.5 L538.6 519.4 M509.7 771.3 L520 805 M498 768 L506 761" stroke-width="2.4" stroke="#333"/><path d="M486.3 646.6 L495.6 674.7 M526.7 497.5 L538.6 519.4 M509.7 771.3 L520 805 M498 768 L506 761" stroke-width="0.9" stroke="#fff"/><path d="M620 592.5 H627 M623 611.3 H629" stroke-width="2.2" stroke="#333"/></g><g transform="translate(947.5,498) scale(0.918) translate(-629.6,-470) translate(1259.2,0) scale(-1,1)" fill="none" stroke="#3047d2" stroke-width="3.6" stroke-dasharray="0 13" stroke-linecap="square"><path d="M584.3 505.7 C583.7 503.8 581.7 496.6 580.5 494.0 C579.3 491.4 577.6 490.8 577.0 490.2 L558.7 528.5 L528.5 470" /><path d="M528.5 470.0 C526.8 472.1 521.7 477.9 518.5 482.8 C515.3 487.7 512.4 493.4 509.3 499.3 C506.2 505.2 503.1 511.4 500.2 518.5 C497.3 525.6 494.4 534.9 492.0 542.2 C489.6 549.5 487.0 557.1 485.6 562.3 C484.2 567.5 484.1 571.5 483.8 573.3 L472.8 580.6 L479.2 588 L470.3 640 L466.6 669 L509.7 819" /><path d="M509.7 819.0 C510.9 820.2 514.4 824.6 517.0 826.0 C519.6 827.4 522.9 828.0 525.6 827.5 C528.3 827.0 530.5 825.2 533.0 823.0 C535.5 820.8 535.6 821.6 540.6 814.4 C545.6 807.2 558.4 785.2 563.1 779.7 C567.8 774.2 567.8 781.3 568.8 781.6 L574.4 795.6 L625 760" /><path d="M625.0 760.0 C625.3 757.2 626.6 745.9 626.9 743.1 L597.7 620.8" /><path d="M547.5 537 Q554 546 558.7 547 Q565 545 571.5 527" stroke-width="0.7"/><path d="M477 600 L507.8 697.2" /><path d="M475 648.4 L524.7 821.9" /><path d="M520 746.9 L496.6 770.3" /><path d="M574.2 628.8 C573.6 630.7 570.4 632.1 570.7 640.3 C571.1 648.5 573.9 670.5 576.3 677.8 C578.7 685.1 583.3 682.2 585.2 684.3 C587.1 686.4 588.5 687.0 587.6 690.3 C586.8 693.6 580.8 700.4 580.1 704.1 C579.4 707.8 581.0 709.9 583.2 712.3 C585.4 714.7 592.8 714.7 593.2 718.3 C593.6 721.9 586.2 730.4 585.7 734.1 C585.2 737.8 588.0 738.8 590.2 740.3 C592.4 741.8 598.8 740.5 598.8 743.3 C598.8 746.1 592.7 753.2 590.2 757.3 C587.7 761.4 584.9 766.0 583.8 767.8" stroke-width="0.6"/><path d="M617.5 649.7 V597.5 Q617.5 594.5 614 593.8 M617.5 649.7 H629.6 M617.5 611.3 H629.6 M629.6 573.5 V649.7" /><path d="M600 603 Q601 595.5 609 595 L620 594.5" stroke-width="0.6"/><path d="M486.3 646.6 L495.6 674.7 M526.7 497.5 L538.6 519.4 M509.7 771.3 L520 805 M498 768 L506 761" stroke-width="2.4" stroke="#333"/><path d="M486.3 646.6 L495.6 674.7 M526.7 497.5 L538.6 519.4 M509.7 771.3 L520 805 M498 768 L506 761" stroke-width="0.9" stroke="#fff"/><path d="M620 592.5 H627 M623 611.3 H629" stroke-width="2.2" stroke="#333"/></g><g transform="translate(947.5,498) scale(0.918) translate(-629.6,-470)" fill="none" stroke="#3047d2" stroke-width="3.4" stroke-dasharray="0 7" stroke-linecap="square"><path d="M629.6 573.5 C627.8 573.3 622.3 573.6 619.0 572.4 C615.7 571.1 613.1 567.6 609.9 566.0 C606.7 564.4 603.3 562.3 600.0 562.5 C596.7 562.7 593.3 565.0 590.0 567.0 C586.7 569.0 582.8 574.2 580.0 574.5 C577.2 574.8 574.5 572.6 573.0 569.0 C571.5 565.4 570.8 557.8 571.0 553.0 C571.2 548.2 573.5 542.2 574.0 540.0 L584.3 505.7" /><path d="M597.7 621 L597.7 600.6 Q598 593.5 606 592.8 L629.6 591.5" /><path d="M518.5 482.8 L545.9 534 Q553 548 558.7 549.5 Q566 548 573.3 527.6 L584.3 505.7" /><path d="M537.7 560.1 C532.7 561.4 526.1 571.7 522.0 580.0 C517.9 588.3 515.1 598.3 513.0 610.0 C510.9 621.7 510.3 635.6 509.3 650.0 C508.3 664.4 506.4 683.8 506.9 696.3 C507.3 708.8 509.8 717.4 512.0 725.0 C514.2 732.6 517.3 738.4 520.0 742.2 C522.7 746.0 524.6 747.8 528.4 747.8 C532.1 747.8 538.1 746.0 542.5 742.2 C546.9 738.4 551.2 732.6 555.0 725.0 C558.8 717.4 563.0 708.9 565.0 696.3 C567.0 683.7 567.4 664.6 566.9 649.4 C566.4 634.2 564.5 617.9 562.0 605.0 C559.5 592.1 556.0 579.5 552.0 572.0 C548.0 564.5 542.7 558.8 537.7 560.1 Z" /><path d="M571.4 727.3 C572.8 726.8 573.8 729.3 574.3 731.4 C574.8 733.5 574.7 736.6 574.6 740.0 C574.5 743.4 574.3 747.4 573.9 751.8 C573.5 756.2 573.2 763.6 572.2 766.5 C571.2 769.4 569.5 769.1 568.1 769.4 C566.7 769.7 565.2 768.9 564.0 768.5 C562.8 768.1 562.1 767.8 560.8 767.3 C559.4 766.8 557.7 765.0 555.9 765.3 C554.1 765.6 552.4 766.5 550.2 769.0 C548.0 771.5 545.7 776.5 542.8 780.4 C539.9 784.3 535.6 790.9 533.0 792.3 C530.4 793.7 529.0 792.0 527.3 788.6 C525.6 785.2 523.3 776.2 522.8 772.2 C522.2 768.2 523.0 765.7 524.0 764.9 C525.0 764.1 526.7 765.8 528.9 767.3 C531.1 768.8 534.8 773.2 537.1 773.9 C539.4 774.6 539.9 774.7 542.8 771.4 C545.6 768.1 550.4 760.3 554.2 754.2 C558.0 748.1 562.8 739.1 565.7 734.6 C568.6 730.1 570.0 727.8 571.4 727.3 Z" /><path d="M597.7 621.4 C594.1 622.6 580.2 625.4 576.0 628.5 C571.8 631.6 572.1 631.8 572.5 640.0 C572.9 648.2 575.7 670.2 578.1 677.5 C580.5 684.8 585.1 681.9 587.0 684.0 C588.9 686.1 590.2 686.7 589.4 690.0 C588.5 693.3 582.6 700.1 581.9 703.8 C581.2 707.5 582.8 709.6 585.0 712.0 C587.2 714.4 594.6 714.4 595.0 718.0 C595.4 721.6 588.0 730.1 587.5 733.8 C587.0 737.5 589.8 738.5 592.0 740.0 C594.2 741.5 600.6 740.2 600.6 743.0 C600.6 745.8 594.5 752.9 592.0 757.0 C589.5 761.1 587.1 762.0 585.6 767.5 C584.1 773.0 583.3 786.2 582.8 790.0" /></g><g transform="translate(947.5,498) scale(0.918) translate(-629.6,-470) translate(1259.2,0) scale(-1,1)" fill="none" stroke="#3047d2" stroke-width="3.4" stroke-dasharray="0 7" stroke-linecap="square"><path d="M629.6 573.5 C627.8 573.3 622.3 573.6 619.0 572.4 C615.7 571.1 613.1 567.6 609.9 566.0 C606.7 564.4 603.3 562.3 600.0 562.5 C596.7 562.7 593.3 565.0 590.0 567.0 C586.7 569.0 582.8 574.2 580.0 574.5 C577.2 574.8 574.5 572.6 573.0 569.0 C571.5 565.4 570.8 557.8 571.0 553.0 C571.2 548.2 573.5 542.2 574.0 540.0 L584.3 505.7" /><path d="M597.7 621 L597.7 600.6 Q598 593.5 606 592.8 L629.6 591.5" /><path d="M518.5 482.8 L545.9 534 Q553 548 558.7 549.5 Q566 548 573.3 527.6 L584.3 505.7" /><path d="M537.7 560.1 C532.7 561.4 526.1 571.7 522.0 580.0 C517.9 588.3 515.1 598.3 513.0 610.0 C510.9 621.7 510.3 635.6 509.3 650.0 C508.3 664.4 506.4 683.8 506.9 696.3 C507.3 708.8 509.8 717.4 512.0 725.0 C514.2 732.6 517.3 738.4 520.0 742.2 C522.7 746.0 524.6 747.8 528.4 747.8 C532.1 747.8 538.1 746.0 542.5 742.2 C546.9 738.4 551.2 732.6 555.0 725.0 C558.8 717.4 563.0 708.9 565.0 696.3 C567.0 683.7 567.4 664.6 566.9 649.4 C566.4 634.2 564.5 617.9 562.0 605.0 C559.5 592.1 556.0 579.5 552.0 572.0 C548.0 564.5 542.7 558.8 537.7 560.1 Z" /><path d="M571.4 727.3 C572.8 726.8 573.8 729.3 574.3 731.4 C574.8 733.5 574.7 736.6 574.6 740.0 C574.5 743.4 574.3 747.4 573.9 751.8 C573.5 756.2 573.2 763.6 572.2 766.5 C571.2 769.4 569.5 769.1 568.1 769.4 C566.7 769.7 565.2 768.9 564.0 768.5 C562.8 768.1 562.1 767.8 560.8 767.3 C559.4 766.8 557.7 765.0 555.9 765.3 C554.1 765.6 552.4 766.5 550.2 769.0 C548.0 771.5 545.7 776.5 542.8 780.4 C539.9 784.3 535.6 790.9 533.0 792.3 C530.4 793.7 529.0 792.0 527.3 788.6 C525.6 785.2 523.3 776.2 522.8 772.2 C522.2 768.2 523.0 765.7 524.0 764.9 C525.0 764.1 526.7 765.8 528.9 767.3 C531.1 768.8 534.8 773.2 537.1 773.9 C539.4 774.6 539.9 774.7 542.8 771.4 C545.6 768.1 550.4 760.3 554.2 754.2 C558.0 748.1 562.8 739.1 565.7 734.6 C568.6 730.1 570.0 727.8 571.4 727.3 Z" /><path d="M597.7 621.4 C594.1 622.6 580.2 625.4 576.0 628.5 C571.8 631.6 572.1 631.8 572.5 640.0 C572.9 648.2 575.7 670.2 578.1 677.5 C580.5 684.8 585.1 681.9 587.0 684.0 C588.9 686.1 590.2 686.7 589.4 690.0 C588.5 693.3 582.6 700.1 581.9 703.8 C581.2 707.5 582.8 709.6 585.0 712.0 C587.2 714.4 594.6 714.4 595.0 718.0 C595.4 721.6 588.0 730.1 587.5 733.8 C587.0 737.5 589.8 738.5 592.0 740.0 C594.2 741.5 600.6 740.2 600.6 743.0 C600.6 745.8 594.5 752.9 592.0 757.0 C589.5 761.1 587.1 762.0 585.6 767.5 C584.1 773.0 583.3 786.2 582.8 790.0" /></g><g transform="translate(947.5,498) scale(0.918) translate(-629.6,-470)"><rect x="599.0" y="581.6" width="5" height="5" fill="#3047d2" stroke="#c8cad4" stroke-width="1.5"/><rect x="617.1" y="581.6" width="5" height="5" fill="#3047d2" stroke="#c8cad4" stroke-width="1.5"/><rect x="580.6" y="616.9" width="5" height="5" fill="#3047d2" stroke="#c8cad4" stroke-width="1.5"/><rect x="582.8" y="641.5" width="5" height="5" fill="#3047d2" stroke="#c8cad4" stroke-width="1.5"/><rect x="587.5" y="666.2" width="5" height="5" fill="#3047d2" stroke="#c8cad4" stroke-width="1.5"/><rect x="584.5" y="687.5" width="5" height="5" fill="#3047d2" stroke="#c8cad4" stroke-width="1.5"/><rect x="587.8" y="713.5" width="5" height="5" fill="#3047d2" stroke="#c8cad4" stroke-width="1.5"/><rect x="591.2" y="740.5" width="5" height="5" fill="#3047d2" stroke="#c8cad4" stroke-width="1.5"/></g><g transform="translate(947.5,498) scale(0.918) translate(-629.6,-470) translate(1259.2,0) scale(-1,1)"><rect x="599.0" y="581.6" width="5" height="5" fill="#3047d2" stroke="#c8cad4" stroke-width="1.5"/><rect x="617.1" y="581.6" width="5" height="5" fill="#3047d2" stroke="#c8cad4" stroke-width="1.5"/><rect x="580.6" y="616.9" width="5" height="5" fill="#3047d2" stroke="#c8cad4" stroke-width="1.5"/><rect x="582.8" y="641.5" width="5" height="5" fill="#3047d2" stroke="#c8cad4" stroke-width="1.5"/><rect x="587.5" y="666.2" width="5" height="5" fill="#3047d2" stroke="#c8cad4" stroke-width="1.5"/><rect x="584.5" y="687.5" width="5" height="5" fill="#3047d2" stroke="#c8cad4" stroke-width="1.5"/><rect x="587.8" y="713.5" width="5" height="5" fill="#3047d2" stroke="#c8cad4" stroke-width="1.5"/><rect x="591.2" y="740.5" width="5" height="5" fill="#3047d2" stroke="#c8cad4" stroke-width="1.5"/></g><circle cx="796" cy="497.5" r="5.3" fill="#d0d4da" stroke="#3a3a3a" stroke-width="1.2"/><circle cx="796" cy="662" r="5.3" fill="#d0d4da" stroke="#3a3a3a" stroke-width="1.2"/><circle cx="796" cy="826.5" r="5.3" fill="#d0d4da" stroke="#3a3a3a" stroke-width="1.2"/><circle cx="947.5" cy="497.5" r="5.3" fill="#d0d4da" stroke="#3a3a3a" stroke-width="1.2"/><circle cx="947.5" cy="826.5" r="5.3" fill="#d0d4da" stroke="#3a3a3a" stroke-width="1.2"/><circle cx="1099" cy="497.5" r="5.3" fill="#d0d4da" stroke="#3a3a3a" stroke-width="1.2"/><circle cx="1099" cy="662" r="5.3" fill="#d0d4da" stroke="#3a3a3a" stroke-width="1.2"/><circle cx="1099" cy="826.5" r="5.3" fill="#d0d4da" stroke="#3a3a3a" stroke-width="1.2"/><circle cx="947.5" cy="662" r="5" fill="#a03030" stroke="#601818" stroke-width="1"/><circle cx="947.5" cy="662" r="3" fill="#5a7ad8"/><circle cx="960" cy="663" r="2.6" fill="#2d3fd0"/></svg>
<svg style="left:0px;top:0px" width="1920" height="1040" viewBox="0 0 1920 1040"><path d="M117.9 26.9 L130.6 51.75 L124.8 52 L131.75 140 L146 300 L159.4 440 L173.5 607 L172.5 607 L156.4 440 L141.8 300 L124.2 140 L116.7 52.8 L110.4 53.5 Z" fill="#f04850"/></svg>
<div class="a" style="left:25px;top:524px;width:224px;height:511px;background:#252525;box-shadow:0 0 0 1px #2c2c2c"></div>
<div class="t" style="left:64.5px;top:530px;color:#f2f2f2;font-size:12px;">Flip Horizontal</div>
<div class="t" style="left:64.5px;top:548px;color:#f2f2f2;font-size:12px;">Flip Vertical</div>
<div class="t" style="left:64.5px;top:566px;color:#f2f2f2;font-size:12px;">Flip Size</div>
<div class="t" style="left:64.5px;top:584px;color:#f2f2f2;font-size:12px;">Copy Size</div>
<div class="a" style="left:26px;top:600px;width:221px;height:18px;background:#6a6a6a;"></div>
<div class="t" style="left:64.5px;top:602px;color:#f2f2f2;font-size:12px;">Paste Size</div>
<div class="a" style="left:26px;top:626px;width:222px;height:1px;background:#343434;"></div>
<div class="t" style="left:64.5px;top:638px;color:#f2f2f2;font-size:12px;">Reset Center</div>
<div class="t" style="left:64.5px;top:656px;color:#f2f2f2;font-size:12px;">Reset Transform</div>
<div class="t" style="left:64.5px;top:674px;color:#858585;font-size:12px;">Remove Fixed Size</div>
<div class="a" style="left:26px;top:698px;width:222px;height:1px;background:#343434;"></div>
<div class="t" style="left:64.5px;top:710px;color:#f2f2f2;font-size:12px;">Align to Pixel</div>
<div class="t" style="left:64.5px;top:728px;color:#f2f2f2;font-size:12px;">Transformed Frame</div>
<div class="t" style="left:64.5px;top:746px;color:#f2f2f2;font-size:12px;">Transform Each</div>
<div class="t" style="left:64.5px;top:764px;color:#f2f2f2;font-size:12px;">Relative Center</div>
<div class="a" style="left:26px;top:788px;width:222px;height:1px;background:#343434;"></div>
<svg style="left:37px;top:802px" width="17" height="13" viewBox="0 0 17 13"><path d="M1.5 6.5 L6 11 L15.5 1.5" fill="none" stroke="#f2f2f2" stroke-width="2.2"/></svg>
<div class="t" style="left:64.5px;top:800px;color:#f2f2f2;font-size:12px;">Transform Shape</div>
<svg style="left:37px;top:820px" width="17" height="13" viewBox="0 0 17 13"><path d="M1.5 6.5 L6 11 L15.5 1.5" fill="none" stroke="#f2f2f2" stroke-width="2.2"/></svg>
<div class="t" style="left:64.5px;top:818px;color:#f2f2f2;font-size:12px;">Transform Content</div>
<div class="t" style="left:64.5px;top:836px;color:#f2f2f2;font-size:12px;">Transform Text Frames</div>
<div class="t" style="left:64.5px;top:854px;color:#f2f2f2;font-size:12px;">Transformed Stroke</div>
<div class="t" style="left:64.5px;top:872px;color:#f2f2f2;font-size:12px;">Uniform Stroke Scaling</div>
<div class="t" style="left:64.5px;top:890px;color:#f2f2f2;font-size:12px;">Transform Image Effects</div>
<div class="t" style="left:64.5px;top:908px;color:#f2f2f2;font-size:12px;">Transformed Content</div>
<div class="t" style="left:64.5px;top:926px;color:#f2f2f2;font-size:12px;">Transformed Fill</div>
<div class="a" style="left:26px;top:950px;width:222px;height:1px;background:#343434;"></div>
<svg style="left:37px;top:964px" width="17" height="13" viewBox="0 0 17 13"><path d="M1.5 6.5 L6 11 L15.5 1.5" fill="none" stroke="#f2f2f2" stroke-width="2.2"/></svg>
<div class="t" style="left:64.5px;top:962px;color:#f2f2f2;font-size:12px;">Move Objects</div>
<div class="t" style="left:64.5px;top:980px;color:#f2f2f2;font-size:12px;">Directional Move</div>
<div class="t" style="left:64.5px;top:998px;color:#f2f2f2;font-size:12px;">Direct Scaling Value</div>
<div class="t" style="left:64.5px;top:1016px;color:#f2f2f2;font-size:12px;">Global Proportional Mode</div>
</body></html>
